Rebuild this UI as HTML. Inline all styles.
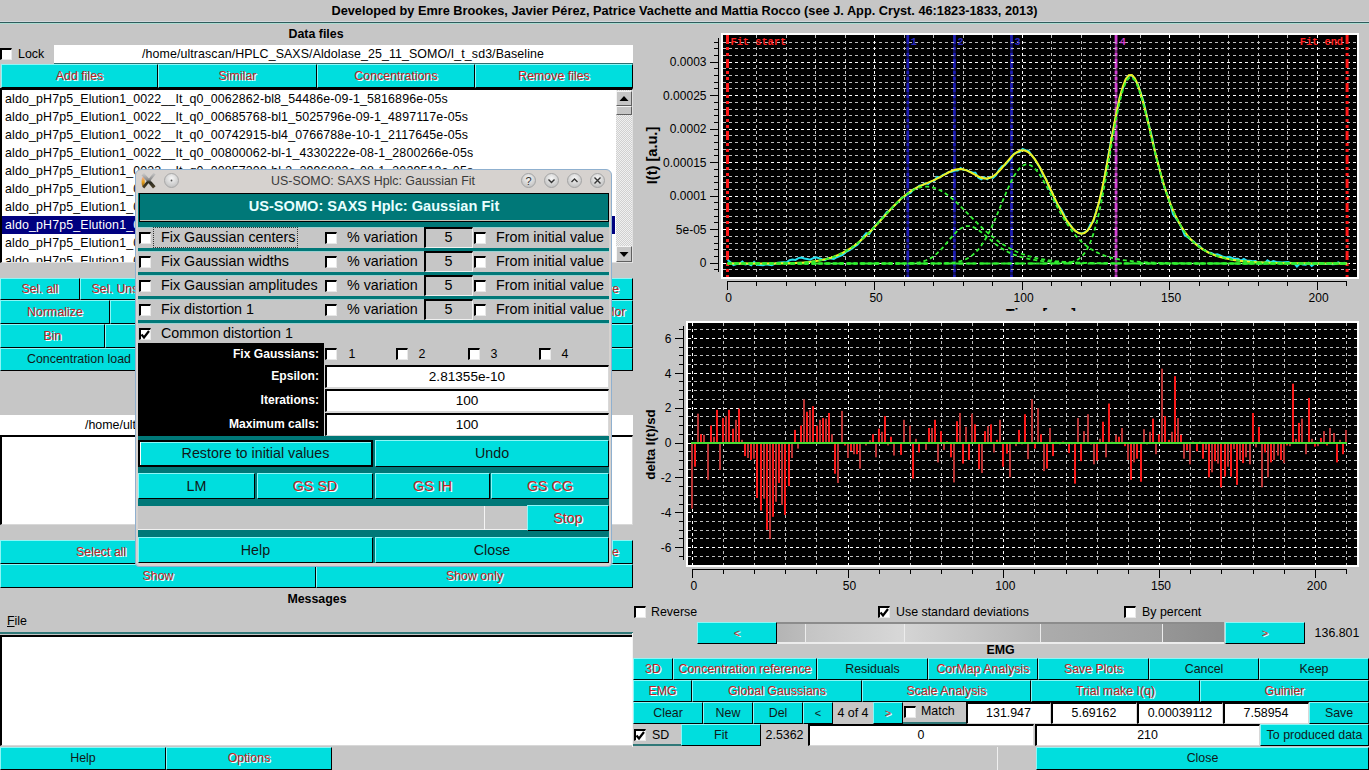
<!DOCTYPE html>
<html><head><meta charset="utf-8"><style>
html,body{margin:0;padding:0}
body{width:1369px;height:770px;position:relative;overflow:hidden;background:#c6c6c6;font-family:"Liberation Sans", sans-serif;color:#000}
body div, body svg{position:absolute}
.t{white-space:nowrap;overflow:visible}
.dis{color:#c42424;text-shadow:1px 1px 0 #fff}
.en{color:#101818}
</style></head><body>
<svg style="left:0;top:0" width="1369" height="770" viewBox="0 0 1369 770">
<rect x="721" y="33" width="638" height="246" fill="#fff"/>
<rect x="723" y="35" width="634" height="242" fill="#000"/>
<line x1="907.82" y1="35" x2="907.82" y2="277" stroke="#101068" stroke-width="2.6"/><line x1="907.82" y1="35" x2="907.82" y2="277" stroke="#1e1eb4" stroke-width="2.6" stroke-dasharray="9 3 3 3 3 3"/>
<line x1="954.40" y1="35" x2="954.40" y2="277" stroke="#101068" stroke-width="2.6"/><line x1="954.40" y1="35" x2="954.40" y2="277" stroke="#1e1eb4" stroke-width="2.6" stroke-dasharray="9 3 3 3 3 3"/>
<line x1="1011.48" y1="35" x2="1011.48" y2="277" stroke="#101068" stroke-width="2.6"/><line x1="1011.48" y1="35" x2="1011.48" y2="277" stroke="#1e1eb4" stroke-width="2.6" stroke-dasharray="9 3 3 3 3 3"/>
<line x1="1116.04" y1="35" x2="1116.04" y2="277" stroke="#7a2a7a" stroke-width="2.6"/><line x1="1116.04" y1="35" x2="1116.04" y2="277" stroke="#d040d0" stroke-width="2.6" stroke-dasharray="9 3 3 3 3 3"/>
<g shape-rendering="crispEdges">
<line x1="723" y1="269.5" x2="1357" y2="269.5" stroke="#bdbdbd" stroke-dasharray="3 3"/>
<line x1="723" y1="256.5" x2="1357" y2="256.5" stroke="#bdbdbd" stroke-dasharray="3 3"/>
<line x1="723" y1="249.5" x2="1357" y2="249.5" stroke="#bdbdbd" stroke-dasharray="3 3"/>
<line x1="723" y1="243.5" x2="1357" y2="243.5" stroke="#bdbdbd" stroke-dasharray="3 3"/>
<line x1="723" y1="236.5" x2="1357" y2="236.5" stroke="#bdbdbd" stroke-dasharray="3 3"/>
<line x1="723" y1="222.5" x2="1357" y2="222.5" stroke="#bdbdbd" stroke-dasharray="3 3"/>
<line x1="723" y1="216.5" x2="1357" y2="216.5" stroke="#bdbdbd" stroke-dasharray="3 3"/>
<line x1="723" y1="209.5" x2="1357" y2="209.5" stroke="#bdbdbd" stroke-dasharray="3 3"/>
<line x1="723" y1="202.5" x2="1357" y2="202.5" stroke="#bdbdbd" stroke-dasharray="3 3"/>
<line x1="723" y1="189.5" x2="1357" y2="189.5" stroke="#bdbdbd" stroke-dasharray="3 3"/>
<line x1="723" y1="182.5" x2="1357" y2="182.5" stroke="#bdbdbd" stroke-dasharray="3 3"/>
<line x1="723" y1="176.5" x2="1357" y2="176.5" stroke="#bdbdbd" stroke-dasharray="3 3"/>
<line x1="723" y1="169.5" x2="1357" y2="169.5" stroke="#bdbdbd" stroke-dasharray="3 3"/>
<line x1="723" y1="155.5" x2="1357" y2="155.5" stroke="#bdbdbd" stroke-dasharray="3 3"/>
<line x1="723" y1="149.5" x2="1357" y2="149.5" stroke="#bdbdbd" stroke-dasharray="3 3"/>
<line x1="723" y1="142.5" x2="1357" y2="142.5" stroke="#bdbdbd" stroke-dasharray="3 3"/>
<line x1="723" y1="135.5" x2="1357" y2="135.5" stroke="#bdbdbd" stroke-dasharray="3 3"/>
<line x1="723" y1="122.5" x2="1357" y2="122.5" stroke="#bdbdbd" stroke-dasharray="3 3"/>
<line x1="723" y1="115.5" x2="1357" y2="115.5" stroke="#bdbdbd" stroke-dasharray="3 3"/>
<line x1="723" y1="109.5" x2="1357" y2="109.5" stroke="#bdbdbd" stroke-dasharray="3 3"/>
<line x1="723" y1="102.5" x2="1357" y2="102.5" stroke="#bdbdbd" stroke-dasharray="3 3"/>
<line x1="723" y1="88.5" x2="1357" y2="88.5" stroke="#bdbdbd" stroke-dasharray="3 3"/>
<line x1="723" y1="82.5" x2="1357" y2="82.5" stroke="#bdbdbd" stroke-dasharray="3 3"/>
<line x1="723" y1="75.5" x2="1357" y2="75.5" stroke="#bdbdbd" stroke-dasharray="3 3"/>
<line x1="723" y1="68.5" x2="1357" y2="68.5" stroke="#bdbdbd" stroke-dasharray="3 3"/>
<line x1="723" y1="55.5" x2="1357" y2="55.5" stroke="#bdbdbd" stroke-dasharray="3 3"/>
<line x1="723" y1="48.5" x2="1357" y2="48.5" stroke="#bdbdbd" stroke-dasharray="3 3"/>
<line x1="723" y1="42.5" x2="1357" y2="42.5" stroke="#bdbdbd" stroke-dasharray="3 3"/>
<line x1="723" y1="263.5" x2="1357" y2="263.5" stroke="#ffffff" stroke-dasharray="3 3"/>
<line x1="723" y1="229.5" x2="1357" y2="229.5" stroke="#ffffff" stroke-dasharray="3 3"/>
<line x1="723" y1="196.5" x2="1357" y2="196.5" stroke="#ffffff" stroke-dasharray="3 3"/>
<line x1="723" y1="162.5" x2="1357" y2="162.5" stroke="#ffffff" stroke-dasharray="3 3"/>
<line x1="723" y1="129.5" x2="1357" y2="129.5" stroke="#ffffff" stroke-dasharray="3 3"/>
<line x1="723" y1="95.5" x2="1357" y2="95.5" stroke="#ffffff" stroke-dasharray="3 3"/>
<line x1="723" y1="62.5" x2="1357" y2="62.5" stroke="#ffffff" stroke-dasharray="3 3"/>
<line x1="756.5" y1="35" x2="756.5" y2="277" stroke="#bdbdbd" stroke-dasharray="3 3"/>
<line x1="786.5" y1="35" x2="786.5" y2="277" stroke="#bdbdbd" stroke-dasharray="3 3"/>
<line x1="815.5" y1="35" x2="815.5" y2="277" stroke="#bdbdbd" stroke-dasharray="3 3"/>
<line x1="845.5" y1="35" x2="845.5" y2="277" stroke="#bdbdbd" stroke-dasharray="3 3"/>
<line x1="904.5" y1="35" x2="904.5" y2="277" stroke="#bdbdbd" stroke-dasharray="3 3"/>
<line x1="933.5" y1="35" x2="933.5" y2="277" stroke="#bdbdbd" stroke-dasharray="3 3"/>
<line x1="963.5" y1="35" x2="963.5" y2="277" stroke="#bdbdbd" stroke-dasharray="3 3"/>
<line x1="992.5" y1="35" x2="992.5" y2="277" stroke="#bdbdbd" stroke-dasharray="3 3"/>
<line x1="1051.5" y1="35" x2="1051.5" y2="277" stroke="#bdbdbd" stroke-dasharray="3 3"/>
<line x1="1081.5" y1="35" x2="1081.5" y2="277" stroke="#bdbdbd" stroke-dasharray="3 3"/>
<line x1="1110.5" y1="35" x2="1110.5" y2="277" stroke="#bdbdbd" stroke-dasharray="3 3"/>
<line x1="1140.5" y1="35" x2="1140.5" y2="277" stroke="#bdbdbd" stroke-dasharray="3 3"/>
<line x1="1199.5" y1="35" x2="1199.5" y2="277" stroke="#bdbdbd" stroke-dasharray="3 3"/>
<line x1="1228.5" y1="35" x2="1228.5" y2="277" stroke="#bdbdbd" stroke-dasharray="3 3"/>
<line x1="1258.5" y1="35" x2="1258.5" y2="277" stroke="#bdbdbd" stroke-dasharray="3 3"/>
<line x1="1287.5" y1="35" x2="1287.5" y2="277" stroke="#bdbdbd" stroke-dasharray="3 3"/>
<line x1="1346.5" y1="35" x2="1346.5" y2="277" stroke="#bdbdbd" stroke-dasharray="3 3"/>
<line x1="727.5" y1="35" x2="727.5" y2="277" stroke="#ffffff" stroke-dasharray="3 3"/>
<line x1="874.5" y1="35" x2="874.5" y2="277" stroke="#ffffff" stroke-dasharray="3 3"/>
<line x1="1022.5" y1="35" x2="1022.5" y2="277" stroke="#ffffff" stroke-dasharray="3 3"/>
<line x1="1169.5" y1="35" x2="1169.5" y2="277" stroke="#ffffff" stroke-dasharray="3 3"/>
<line x1="1317.5" y1="35" x2="1317.5" y2="277" stroke="#ffffff" stroke-dasharray="3 3"/>
</g>
<line x1="727.50" y1="35" x2="727.50" y2="277" stroke="#ff1a1a" stroke-width="3" stroke-dasharray="9 3 3 3 3 3"/>
<line x1="1347.10" y1="35" x2="1347.10" y2="277" stroke="#ff1a1a" stroke-width="3" stroke-dasharray="9 3 3 3 3 3"/>
<line x1="727.6" y1="263.5" x2="1347.1" y2="263.5" stroke="#30ee30" stroke-width="2" stroke-dasharray="8 4"/>
<polyline points="727.60,259.97 730.55,262.22 733.50,265.07 736.45,263.97 739.40,263.94 742.35,261.52 745.30,264.43 748.25,263.83 751.20,265.27 754.15,262.04 757.10,264.82 760.05,264.92 763.00,265.25 765.95,264.22 768.90,264.69 771.85,265.27 774.80,263.57 777.75,262.67 780.70,262.52 783.65,262.37 786.60,262.38 789.55,260.19 792.50,259.42 795.45,259.95 798.40,258.13 801.35,257.47 804.30,258.45 807.25,259.01 810.20,259.72 813.15,258.18 816.10,257.23 819.05,258.28 822.00,259.22 824.95,260.06 827.90,258.28 830.85,258.63 833.80,259.03 836.75,257.23 839.70,256.05 842.65,254.81 845.60,252.17 848.55,250.72 851.50,248.89 854.45,246.76 857.40,244.79 860.35,241.21 863.30,236.50 866.25,233.25 869.20,234.24 872.15,229.37 875.10,225.58 878.05,222.76 881.00,219.35 883.95,216.08 886.90,212.04 889.85,210.24 892.80,206.91 895.75,204.15 898.70,201.56 901.65,197.59 904.60,196.59 907.55,194.10 910.50,192.84 913.45,189.40 916.40,188.21 919.35,185.72 922.30,185.12 925.25,183.20 928.20,183.88 931.15,181.36 934.10,181.04 937.05,176.76 940.00,177.36 942.95,175.00 945.90,173.89 948.85,171.90 951.80,171.68 954.75,170.61 957.70,170.41 960.65,167.99 963.60,170.07 966.55,169.98 969.50,171.76 972.45,172.49 975.40,172.81 978.35,177.65 981.30,179.31 984.25,177.29 987.20,179.32 990.15,176.84 993.10,177.86 996.05,175.10 999.00,169.88 1001.95,166.40 1004.90,165.10 1007.85,161.80 1010.80,158.51 1013.75,154.06 1016.70,152.44 1019.65,152.05 1022.60,149.02 1025.55,150.25 1028.50,150.57 1031.45,155.10 1034.40,158.48 1037.35,163.79 1040.30,168.16 1043.25,175.47 1046.20,179.11 1049.15,188.61 1052.10,192.28 1055.05,200.69 1058.00,205.30 1060.95,209.04 1063.90,214.47 1066.85,221.47 1069.80,224.20 1072.75,228.54 1075.70,231.14 1078.65,233.09 1081.60,233.60 1084.55,232.43 1087.50,230.57 1090.45,224.28 1093.40,221.56 1096.35,210.78 1099.30,201.70 1102.25,189.82 1105.20,173.61 1108.15,156.69 1111.10,140.45 1114.05,125.39 1117.00,111.17 1119.95,96.06 1122.90,88.41 1125.85,79.04 1128.80,75.62 1131.75,75.32 1134.70,79.00 1137.65,84.26 1140.60,92.23 1143.55,101.75 1146.50,114.51 1149.45,127.17 1152.40,138.54 1155.35,153.68 1158.30,164.61 1161.25,176.25 1164.20,187.04 1167.15,194.25 1170.10,203.52 1173.05,214.34 1176.00,218.27 1178.95,222.70 1181.90,228.17 1184.85,235.58 1187.80,237.22 1190.75,239.72 1193.70,241.43 1196.65,244.49 1199.60,246.04 1202.55,249.28 1205.50,250.53 1208.45,252.59 1211.40,253.03 1214.35,254.69 1217.30,254.25 1220.25,255.44 1223.20,256.84 1226.15,257.41 1229.10,256.75 1232.05,257.86 1235.00,258.87 1237.95,258.75 1240.90,260.58 1243.85,258.99 1246.80,260.61 1249.75,260.68 1252.70,261.21 1255.65,261.02 1258.60,263.94 1261.55,262.24 1264.50,263.47 1267.45,260.33 1270.40,262.30 1273.35,261.05 1276.30,261.93 1279.25,262.13 1282.20,262.42 1285.15,262.23 1288.10,262.11 1291.05,263.09 1294.00,263.09 1296.95,266.48 1299.90,263.54 1302.85,264.42 1305.80,264.67 1308.75,262.78 1311.70,265.81 1314.65,263.63 1317.60,263.22 1320.55,263.26 1323.50,263.71 1326.45,264.08 1329.40,263.32 1332.35,264.26 1335.30,264.00 1338.25,262.43 1341.20,263.64 1344.15,262.87 1347.10,264.18" fill="none" stroke="#22e0f0" stroke-width="2"/>
<polyline points="727.60,263.50 730.55,263.50 733.50,263.50 736.45,263.50 739.40,263.50 742.35,263.50 745.30,263.49 748.25,263.49 751.20,263.49 754.15,263.49 757.10,263.48 760.05,263.47 763.00,263.47 765.95,263.46 768.90,263.44 771.85,263.42 774.80,263.40 777.75,263.37 780.70,263.33 783.65,263.28 786.60,263.22 789.55,263.15 792.50,263.05 795.45,262.94 798.40,262.80 801.35,262.63 804.30,262.42 807.25,262.17 810.20,261.87 813.15,261.51 816.10,261.09 819.05,260.60 822.00,260.02 824.95,259.35 827.90,258.58 830.85,257.70 833.80,256.69 836.75,255.55 839.70,254.26 842.65,252.83 845.60,251.23 848.55,249.48 851.50,247.55 854.45,245.45 857.40,243.18 860.35,240.74 863.30,238.15 866.25,235.40 869.20,232.51 872.15,229.50 875.10,226.39 878.05,223.20 881.00,219.95 883.95,216.68 886.90,213.42 889.85,210.19 892.80,207.04 895.75,204.00 898.70,201.09 901.65,198.36 904.60,195.82 907.55,193.50 910.50,191.40 913.45,189.53 916.40,187.87 919.35,186.40 922.30,185.07 925.25,183.84 928.20,182.64 931.15,181.41 934.10,180.10 937.05,178.68 940.00,177.14 942.95,175.50 945.90,173.85 948.85,172.26 951.80,170.88 954.75,169.80 957.70,169.16 960.65,169.03 963.60,169.43 966.55,170.35 969.50,171.67 972.45,173.26 975.40,174.93 978.35,176.48 981.30,177.70 984.25,178.40 987.20,178.45 990.15,177.75 993.10,176.29 996.05,174.10 999.00,171.29 1001.95,168.01 1004.90,164.47 1007.85,160.89 1010.80,157.51 1013.75,154.56 1016.70,152.27 1019.65,150.80 1022.60,150.29 1025.55,150.82 1028.50,152.42 1031.45,155.05 1034.40,158.65 1037.35,163.09 1040.30,168.24 1043.25,173.92 1046.20,179.99 1049.15,186.25 1052.10,192.58 1055.05,198.81 1058.00,204.84 1060.95,210.55 1063.90,215.85 1066.85,220.67 1069.80,224.90 1072.75,228.46 1075.70,231.22 1078.65,233.02 1081.60,233.68 1084.55,232.97 1087.50,230.65 1090.45,226.47 1093.40,220.22 1096.35,211.76 1099.30,201.06 1102.25,188.27 1105.20,173.69 1108.15,157.84 1111.10,141.39 1114.05,125.17 1117.00,110.03 1119.95,96.83 1122.90,86.29 1125.85,78.96 1128.80,75.18 1131.75,74.98 1134.70,78.19 1137.65,84.42 1140.60,93.14 1143.55,103.73 1146.50,115.55 1149.45,128.02 1152.40,140.62 1155.35,152.94 1158.30,164.69 1161.25,175.65 1164.20,185.72 1167.15,194.85 1170.10,203.05 1173.05,210.35 1176.00,216.82 1178.95,222.54 1181.90,227.57 1184.85,231.99 1187.80,235.87 1190.75,239.28 1193.70,242.27 1196.65,244.89 1199.60,247.19 1202.55,249.20 1205.50,250.97 1208.45,252.51 1211.40,253.87 1214.35,255.06 1217.30,256.10 1220.25,257.01 1223.20,257.81 1226.15,258.52 1229.10,259.13 1232.05,259.67 1235.00,260.14 1237.95,260.56 1240.90,260.92 1243.85,261.24 1246.80,261.52 1249.75,261.76 1252.70,261.98 1255.65,262.17 1258.60,262.33 1261.55,262.47 1264.50,262.60 1267.45,262.71 1270.40,262.81 1273.35,262.89 1276.30,262.97 1279.25,263.03 1282.20,263.09 1285.15,263.14 1288.10,263.19 1291.05,263.23 1294.00,263.26 1296.95,263.29 1299.90,263.32 1302.85,263.34 1305.80,263.36 1308.75,263.38 1311.70,263.39 1314.65,263.40 1317.60,263.42 1320.55,263.43 1323.50,263.44 1326.45,263.44 1329.40,263.45 1332.35,263.46 1335.30,263.46 1338.25,263.47 1341.20,263.47 1344.15,263.47 1347.10,263.48" fill="none" stroke="#f0f020" stroke-width="2"/>
<polyline points="727.60,263.50 730.55,263.50 733.50,263.50 736.45,263.50 739.40,263.50 742.35,263.50 745.30,263.49 748.25,263.49 751.20,263.49 754.15,263.49 757.10,263.48 760.05,263.47 763.00,263.47 765.95,263.46 768.90,263.44 771.85,263.42 774.80,263.40 777.75,263.37 780.70,263.33 783.65,263.28 786.60,263.22 789.55,263.15 792.50,263.05 795.45,262.94 798.40,262.80 801.35,262.63 804.30,262.42 807.25,262.17 810.20,261.87 813.15,261.51 816.10,261.09 819.05,260.60 822.00,260.02 824.95,259.35 827.90,258.58 830.85,257.70 833.80,256.69 836.75,255.55 839.70,254.26 842.65,252.83 845.60,251.23 848.55,249.48 851.50,247.55 854.45,245.45 857.40,243.18 860.35,240.74 863.30,238.15 866.25,235.40 869.20,232.51 872.15,229.50 875.10,226.39 878.05,223.20 881.00,219.95 883.95,216.68 886.90,213.42 889.85,210.20 892.80,207.05 895.75,204.01 898.70,201.12 901.65,198.41 904.60,195.91 907.55,193.66 910.50,191.68 913.45,190.00 916.40,188.64 919.35,187.61 922.30,186.94 925.25,186.61 928.20,186.65 931.15,187.03 934.10,187.76 937.05,188.82 940.00,190.20 942.95,191.86 945.90,193.79 948.85,195.97 951.80,198.35 954.75,200.91 957.70,203.62 960.65,206.45 963.60,209.36 966.55,212.32 969.50,215.30 972.45,218.29 975.40,221.24 978.35,224.15 981.30,226.98 984.25,229.72 987.20,232.37 990.15,234.89 993.10,237.30 996.05,239.57 999.00,241.72 1001.95,243.72 1004.90,245.59 1007.85,247.32 1010.80,248.92 1013.75,250.40 1016.70,251.75 1019.65,252.98 1022.60,254.10 1025.55,255.12 1028.50,256.04 1031.45,256.87 1034.40,257.62 1037.35,258.29 1040.30,258.89 1043.25,259.42 1046.20,259.90 1049.15,260.32 1052.10,260.70 1055.05,261.03 1058.00,261.33 1060.95,261.59 1063.90,261.82 1066.85,262.02 1069.80,262.20 1072.75,262.36 1075.70,262.50 1078.65,262.62 1081.60,262.73 1084.55,262.82 1087.50,262.91 1090.45,262.98 1093.40,263.04 1096.35,263.10 1099.30,263.15 1102.25,263.19 1105.20,263.23 1108.15,263.26 1111.10,263.29 1114.05,263.32 1117.00,263.34 1119.95,263.36 1122.90,263.38 1125.85,263.39 1128.80,263.41 1131.75,263.42 1134.70,263.43 1137.65,263.44 1140.60,263.44 1143.55,263.45 1146.50,263.46 1149.45,263.46 1152.40,263.47 1155.35,263.47 1158.30,263.47 1161.25,263.48 1164.20,263.48 1167.15,263.48 1170.10,263.49 1173.05,263.49 1176.00,263.49 1178.95,263.49 1181.90,263.49 1184.85,263.49 1187.80,263.49 1190.75,263.49 1193.70,263.49 1196.65,263.50 1199.60,263.50 1202.55,263.50 1205.50,263.50 1208.45,263.50 1211.40,263.50 1214.35,263.50 1217.30,263.50 1220.25,263.50 1223.20,263.50 1226.15,263.50 1229.10,263.50 1232.05,263.50 1235.00,263.50 1237.95,263.50 1240.90,263.50 1243.85,263.50 1246.80,263.50 1249.75,263.50 1252.70,263.50 1255.65,263.50 1258.60,263.50 1261.55,263.50 1264.50,263.50 1267.45,263.50 1270.40,263.50 1273.35,263.50 1276.30,263.50 1279.25,263.50 1282.20,263.50 1285.15,263.50 1288.10,263.50 1291.05,263.50 1294.00,263.50 1296.95,263.50 1299.90,263.50 1302.85,263.50 1305.80,263.50 1308.75,263.50 1311.70,263.50 1314.65,263.50 1317.60,263.50 1320.55,263.50 1323.50,263.50 1326.45,263.50 1329.40,263.50 1332.35,263.50 1335.30,263.50 1338.25,263.50 1341.20,263.50 1344.15,263.50 1347.10,263.50" fill="none" stroke="#30ee30" stroke-width="1.8" stroke-dasharray="4 3"/>
<polyline points="727.60,263.50 730.55,263.50 733.50,263.50 736.45,263.50 739.40,263.50 742.35,263.50 745.30,263.50 748.25,263.50 751.20,263.50 754.15,263.50 757.10,263.50 760.05,263.50 763.00,263.50 765.95,263.50 768.90,263.50 771.85,263.50 774.80,263.50 777.75,263.50 780.70,263.50 783.65,263.50 786.60,263.50 789.55,263.50 792.50,263.50 795.45,263.50 798.40,263.50 801.35,263.50 804.30,263.50 807.25,263.50 810.20,263.50 813.15,263.50 816.10,263.50 819.05,263.50 822.00,263.50 824.95,263.50 827.90,263.50 830.85,263.50 833.80,263.50 836.75,263.50 839.70,263.50 842.65,263.50 845.60,263.50 848.55,263.50 851.50,263.50 854.45,263.50 857.40,263.50 860.35,263.50 863.30,263.50 866.25,263.50 869.20,263.50 872.15,263.50 875.10,263.50 878.05,263.50 881.00,263.50 883.95,263.50 886.90,263.50 889.85,263.50 892.80,263.49 895.75,263.49 898.70,263.47 901.65,263.45 904.60,263.41 907.55,263.34 910.50,263.22 913.45,263.03 916.40,262.73 919.35,262.29 922.30,261.64 925.25,260.73 928.20,259.51 931.15,257.91 934.10,255.89 937.05,253.44 940.00,250.58 942.95,247.36 945.90,243.89 948.85,240.31 951.80,236.80 954.75,233.54 957.70,230.71 960.65,228.46 963.60,226.92 966.55,226.13 969.50,226.11 972.45,226.81 975.40,228.14 978.35,229.96 981.30,232.16 984.25,234.58 987.20,237.11 990.15,239.65 993.10,242.11 996.05,244.43 999.00,246.59 1001.95,248.55 1004.90,250.33 1007.85,251.91 1010.80,253.32 1013.75,254.56 1016.70,255.66 1019.65,256.63 1022.60,257.47 1025.55,258.22 1028.50,258.87 1031.45,259.44 1034.40,259.94 1037.35,260.38 1040.30,260.77 1043.25,261.10 1046.20,261.40 1049.15,261.66 1052.10,261.89 1055.05,262.08 1058.00,262.26 1060.95,262.41 1063.90,262.55 1066.85,262.66 1069.80,262.77 1072.75,262.86 1075.70,262.94 1078.65,263.01 1081.60,263.07 1084.55,263.12 1087.50,263.17 1090.45,263.21 1093.40,263.24 1096.35,263.28 1099.30,263.30 1102.25,263.33 1105.20,263.35 1108.15,263.37 1111.10,263.38 1114.05,263.40 1117.00,263.41 1119.95,263.42 1122.90,263.43 1125.85,263.44 1128.80,263.45 1131.75,263.45 1134.70,263.46 1137.65,263.46 1140.60,263.47 1143.55,263.47 1146.50,263.48 1149.45,263.48 1152.40,263.48 1155.35,263.48 1158.30,263.49 1161.25,263.49 1164.20,263.49 1167.15,263.49 1170.10,263.49 1173.05,263.49 1176.00,263.49 1178.95,263.49 1181.90,263.50 1184.85,263.50 1187.80,263.50 1190.75,263.50 1193.70,263.50 1196.65,263.50 1199.60,263.50 1202.55,263.50 1205.50,263.50 1208.45,263.50 1211.40,263.50 1214.35,263.50 1217.30,263.50 1220.25,263.50 1223.20,263.50 1226.15,263.50 1229.10,263.50 1232.05,263.50 1235.00,263.50 1237.95,263.50 1240.90,263.50 1243.85,263.50 1246.80,263.50 1249.75,263.50 1252.70,263.50 1255.65,263.50 1258.60,263.50 1261.55,263.50 1264.50,263.50 1267.45,263.50 1270.40,263.50 1273.35,263.50 1276.30,263.50 1279.25,263.50 1282.20,263.50 1285.15,263.50 1288.10,263.50 1291.05,263.50 1294.00,263.50 1296.95,263.50 1299.90,263.50 1302.85,263.50 1305.80,263.50 1308.75,263.50 1311.70,263.50 1314.65,263.50 1317.60,263.50 1320.55,263.50 1323.50,263.50 1326.45,263.50 1329.40,263.50 1332.35,263.50 1335.30,263.50 1338.25,263.50 1341.20,263.50 1344.15,263.50 1347.10,263.50" fill="none" stroke="#30ee30" stroke-width="1.8" stroke-dasharray="4 3"/>
<polyline points="727.60,263.50 730.55,263.50 733.50,263.50 736.45,263.50 739.40,263.50 742.35,263.50 745.30,263.50 748.25,263.50 751.20,263.50 754.15,263.50 757.10,263.50 760.05,263.50 763.00,263.50 765.95,263.50 768.90,263.50 771.85,263.50 774.80,263.50 777.75,263.50 780.70,263.50 783.65,263.50 786.60,263.50 789.55,263.50 792.50,263.50 795.45,263.50 798.40,263.50 801.35,263.50 804.30,263.50 807.25,263.50 810.20,263.50 813.15,263.50 816.10,263.50 819.05,263.50 822.00,263.50 824.95,263.50 827.90,263.50 830.85,263.50 833.80,263.50 836.75,263.50 839.70,263.50 842.65,263.50 845.60,263.50 848.55,263.50 851.50,263.50 854.45,263.50 857.40,263.50 860.35,263.50 863.30,263.50 866.25,263.50 869.20,263.50 872.15,263.50 875.10,263.50 878.05,263.50 881.00,263.50 883.95,263.50 886.90,263.50 889.85,263.50 892.80,263.50 895.75,263.50 898.70,263.50 901.65,263.50 904.60,263.50 907.55,263.50 910.50,263.50 913.45,263.50 916.40,263.50 919.35,263.50 922.30,263.49 925.25,263.49 928.20,263.48 931.15,263.47 934.10,263.45 937.05,263.41 940.00,263.36 942.95,263.28 945.90,263.16 948.85,262.98 951.80,262.72 954.75,262.35 957.70,261.84 960.65,261.12 963.60,260.16 966.55,258.90 969.50,257.25 972.45,255.16 975.40,252.56 978.35,249.37 981.30,245.56 984.25,241.10 987.20,235.97 990.15,230.21 993.10,223.88 996.05,217.09 999.00,209.98 1001.95,202.73 1004.90,195.55 1007.85,188.65 1010.80,182.26 1013.75,176.60 1016.70,171.86 1019.65,168.19 1022.60,165.71 1025.55,164.48 1028.50,164.51 1031.45,165.74 1034.40,168.09 1037.35,171.42 1040.30,175.58 1043.25,180.40 1046.20,185.69 1049.15,191.29 1052.10,197.02 1055.05,202.74 1058.00,208.34 1060.95,213.72 1063.90,218.81 1066.85,223.57 1069.80,227.95 1072.75,231.96 1075.70,235.59 1078.65,238.86 1081.60,241.79 1084.55,244.39 1087.50,246.70 1090.45,248.74 1093.40,250.55 1096.35,252.14 1099.30,253.53 1102.25,254.76 1105.20,255.84 1108.15,256.78 1111.10,257.61 1114.05,258.34 1117.00,258.97 1119.95,259.53 1122.90,260.02 1125.85,260.45 1128.80,260.83 1131.75,261.16 1134.70,261.45 1137.65,261.70 1140.60,261.92 1143.55,262.12 1146.50,262.29 1149.45,262.44 1152.40,262.57 1155.35,262.68 1158.30,262.78 1161.25,262.87 1164.20,262.95 1167.15,263.02 1170.10,263.08 1173.05,263.13 1176.00,263.18 1178.95,263.22 1181.90,263.25 1184.85,263.28 1187.80,263.31 1190.75,263.33 1193.70,263.35 1196.65,263.37 1199.60,263.39 1202.55,263.40 1205.50,263.41 1208.45,263.42 1211.40,263.43 1214.35,263.44 1217.30,263.45 1220.25,263.46 1223.20,263.46 1226.15,263.47 1229.10,263.47 1232.05,263.47 1235.00,263.48 1237.95,263.48 1240.90,263.48 1243.85,263.48 1246.80,263.49 1249.75,263.49 1252.70,263.49 1255.65,263.49 1258.60,263.49 1261.55,263.49 1264.50,263.49 1267.45,263.49 1270.40,263.50 1273.35,263.50 1276.30,263.50 1279.25,263.50 1282.20,263.50 1285.15,263.50 1288.10,263.50 1291.05,263.50 1294.00,263.50 1296.95,263.50 1299.90,263.50 1302.85,263.50 1305.80,263.50 1308.75,263.50 1311.70,263.50 1314.65,263.50 1317.60,263.50 1320.55,263.50 1323.50,263.50 1326.45,263.50 1329.40,263.50 1332.35,263.50 1335.30,263.50 1338.25,263.50 1341.20,263.50 1344.15,263.50 1347.10,263.50" fill="none" stroke="#30ee30" stroke-width="1.8" stroke-dasharray="4 3"/>
<polyline points="727.60,263.50 730.55,263.50 733.50,263.50 736.45,263.50 739.40,263.50 742.35,263.50 745.30,263.50 748.25,263.50 751.20,263.50 754.15,263.50 757.10,263.50 760.05,263.50 763.00,263.50 765.95,263.50 768.90,263.50 771.85,263.50 774.80,263.50 777.75,263.50 780.70,263.50 783.65,263.50 786.60,263.50 789.55,263.50 792.50,263.50 795.45,263.50 798.40,263.50 801.35,263.50 804.30,263.50 807.25,263.50 810.20,263.50 813.15,263.50 816.10,263.50 819.05,263.50 822.00,263.50 824.95,263.50 827.90,263.50 830.85,263.50 833.80,263.50 836.75,263.50 839.70,263.50 842.65,263.50 845.60,263.50 848.55,263.50 851.50,263.50 854.45,263.50 857.40,263.50 860.35,263.50 863.30,263.50 866.25,263.50 869.20,263.50 872.15,263.50 875.10,263.50 878.05,263.50 881.00,263.50 883.95,263.50 886.90,263.50 889.85,263.50 892.80,263.50 895.75,263.50 898.70,263.50 901.65,263.50 904.60,263.50 907.55,263.50 910.50,263.50 913.45,263.50 916.40,263.50 919.35,263.50 922.30,263.50 925.25,263.50 928.20,263.50 931.15,263.50 934.10,263.50 937.05,263.50 940.00,263.50 942.95,263.50 945.90,263.50 948.85,263.50 951.80,263.50 954.75,263.50 957.70,263.50 960.65,263.50 963.60,263.50 966.55,263.50 969.50,263.50 972.45,263.50 975.40,263.50 978.35,263.50 981.30,263.50 984.25,263.50 987.20,263.50 990.15,263.50 993.10,263.50 996.05,263.50 999.00,263.50 1001.95,263.50 1004.90,263.50 1007.85,263.50 1010.80,263.50 1013.75,263.50 1016.70,263.50 1019.65,263.50 1022.60,263.50 1025.55,263.50 1028.50,263.50 1031.45,263.50 1034.40,263.50 1037.35,263.50 1040.30,263.50 1043.25,263.50 1046.20,263.49 1049.15,263.49 1052.10,263.48 1055.05,263.45 1058.00,263.41 1060.95,263.32 1063.90,263.17 1066.85,262.91 1069.80,262.48 1072.75,261.78 1075.70,260.69 1078.65,259.03 1081.60,256.59 1084.55,253.13 1087.50,248.37 1090.45,242.03 1093.40,233.88 1096.35,223.75 1099.30,211.58 1102.25,197.49 1105.20,181.77 1108.15,164.92 1111.10,147.61 1114.05,130.61 1117.00,114.80 1119.95,101.01 1122.90,89.96 1125.85,82.18 1128.80,77.99 1131.75,77.45 1134.70,80.36 1137.65,86.32 1140.60,94.81 1143.55,105.18 1146.50,116.83 1149.45,129.14 1152.40,141.60 1155.35,153.80 1158.30,165.44 1161.25,176.32 1164.20,186.30 1167.15,195.36 1170.10,203.49 1173.05,210.74 1176.00,217.16 1178.95,222.84 1181.90,227.83 1184.85,232.22 1187.80,236.08 1190.75,239.46 1193.70,242.43 1196.65,245.03 1199.60,247.31 1202.55,249.31 1205.50,251.06 1208.45,252.59 1211.40,253.94 1214.35,255.12 1217.30,256.15 1220.25,257.06 1223.20,257.86 1226.15,258.55 1229.10,259.16 1232.05,259.70 1235.00,260.17 1237.95,260.58 1240.90,260.94 1243.85,261.26 1246.80,261.53 1249.75,261.78 1252.70,261.99 1255.65,262.18 1258.60,262.34 1261.55,262.48 1264.50,262.61 1267.45,262.72 1270.40,262.81 1273.35,262.90 1276.30,262.97 1279.25,263.04 1282.20,263.10 1285.15,263.15 1288.10,263.19 1291.05,263.23 1294.00,263.26 1296.95,263.29 1299.90,263.32 1302.85,263.34 1305.80,263.36 1308.75,263.38 1311.70,263.39 1314.65,263.41 1317.60,263.42 1320.55,263.43 1323.50,263.44 1326.45,263.44 1329.40,263.45 1332.35,263.46 1335.30,263.46 1338.25,263.47 1341.20,263.47 1344.15,263.47 1347.10,263.48" fill="none" stroke="#30ee30" stroke-width="1.8" stroke-dasharray="4 3"/>
<text x="730.5" y="45" font-family="Liberation Mono" font-weight="bold" font-size="10.3" fill="#ff2020">Fit start</text>
<text x="1343" y="45" font-family="Liberation Mono" font-weight="bold" font-size="10.3" fill="#ff2020" text-anchor="end">Fit end</text>
<text x="910.8" y="45" font-family="Liberation Mono" font-weight="bold" font-size="10.3" fill="#2828c0">1</text>
<text x="957.4" y="45" font-family="Liberation Mono" font-weight="bold" font-size="10.3" fill="#2828c0">2</text>
<text x="1014.5" y="45" font-family="Liberation Mono" font-weight="bold" font-size="10.3" fill="#2828c0">3</text>
<text x="1119.8" y="45" font-family="Liberation Mono" font-weight="bold" font-size="10.3" fill="#d040d0">4</text>
<g shape-rendering="crispEdges" stroke="#000">
<line x1="718.5" y1="38" x2="718.5" y2="272"/>
<line x1="714" y1="269.5" x2="719" y2="269.5"/>
<line x1="710" y1="263.5" x2="719" y2="263.5"/>
<line x1="714" y1="256.5" x2="719" y2="256.5"/>
<line x1="714" y1="249.5" x2="719" y2="249.5"/>
<line x1="714" y1="243.5" x2="719" y2="243.5"/>
<line x1="714" y1="236.5" x2="719" y2="236.5"/>
<line x1="710" y1="229.5" x2="719" y2="229.5"/>
<line x1="714" y1="222.5" x2="719" y2="222.5"/>
<line x1="714" y1="216.5" x2="719" y2="216.5"/>
<line x1="714" y1="209.5" x2="719" y2="209.5"/>
<line x1="714" y1="202.5" x2="719" y2="202.5"/>
<line x1="710" y1="196.5" x2="719" y2="196.5"/>
<line x1="714" y1="189.5" x2="719" y2="189.5"/>
<line x1="714" y1="182.5" x2="719" y2="182.5"/>
<line x1="714" y1="176.5" x2="719" y2="176.5"/>
<line x1="714" y1="169.5" x2="719" y2="169.5"/>
<line x1="710" y1="162.5" x2="719" y2="162.5"/>
<line x1="714" y1="155.5" x2="719" y2="155.5"/>
<line x1="714" y1="149.5" x2="719" y2="149.5"/>
<line x1="714" y1="142.5" x2="719" y2="142.5"/>
<line x1="714" y1="135.5" x2="719" y2="135.5"/>
<line x1="710" y1="129.5" x2="719" y2="129.5"/>
<line x1="714" y1="122.5" x2="719" y2="122.5"/>
<line x1="714" y1="115.5" x2="719" y2="115.5"/>
<line x1="714" y1="109.5" x2="719" y2="109.5"/>
<line x1="714" y1="102.5" x2="719" y2="102.5"/>
<line x1="710" y1="95.5" x2="719" y2="95.5"/>
<line x1="714" y1="88.5" x2="719" y2="88.5"/>
<line x1="714" y1="82.5" x2="719" y2="82.5"/>
<line x1="714" y1="75.5" x2="719" y2="75.5"/>
<line x1="714" y1="68.5" x2="719" y2="68.5"/>
<line x1="710" y1="62.5" x2="719" y2="62.5"/>
<line x1="714" y1="55.5" x2="719" y2="55.5"/>
<line x1="714" y1="48.5" x2="719" y2="48.5"/>
<line x1="714" y1="42.5" x2="719" y2="42.5"/>
<line x1="727" y1="281.5" x2="1347" y2="281.5"/>
<line x1="727.5" y1="281" x2="727.5" y2="290"/>
<line x1="756.5" y1="281" x2="756.5" y2="286"/>
<line x1="786.5" y1="281" x2="786.5" y2="286"/>
<line x1="815.5" y1="281" x2="815.5" y2="286"/>
<line x1="845.5" y1="281" x2="845.5" y2="286"/>
<line x1="874.5" y1="281" x2="874.5" y2="290"/>
<line x1="904.5" y1="281" x2="904.5" y2="286"/>
<line x1="933.5" y1="281" x2="933.5" y2="286"/>
<line x1="963.5" y1="281" x2="963.5" y2="286"/>
<line x1="992.5" y1="281" x2="992.5" y2="286"/>
<line x1="1022.5" y1="281" x2="1022.5" y2="290"/>
<line x1="1051.5" y1="281" x2="1051.5" y2="286"/>
<line x1="1081.5" y1="281" x2="1081.5" y2="286"/>
<line x1="1110.5" y1="281" x2="1110.5" y2="286"/>
<line x1="1140.5" y1="281" x2="1140.5" y2="286"/>
<line x1="1169.5" y1="281" x2="1169.5" y2="290"/>
<line x1="1199.5" y1="281" x2="1199.5" y2="286"/>
<line x1="1228.5" y1="281" x2="1228.5" y2="286"/>
<line x1="1258.5" y1="281" x2="1258.5" y2="286"/>
<line x1="1287.5" y1="281" x2="1287.5" y2="286"/>
<line x1="1317.5" y1="281" x2="1317.5" y2="290"/>
<line x1="1346.5" y1="281" x2="1346.5" y2="286"/>
</g>
<text x="706.5" y="267.4" font-family="Liberation Sans" font-size="12" text-anchor="end">0</text>
<text x="706.5" y="233.9" font-family="Liberation Sans" font-size="12" text-anchor="end">5e-05</text>
<text x="706.5" y="200.4" font-family="Liberation Sans" font-size="12" text-anchor="end">0.0001</text>
<text x="706.5" y="166.9" font-family="Liberation Sans" font-size="12" text-anchor="end">0.00015</text>
<text x="706.5" y="133.4" font-family="Liberation Sans" font-size="12" text-anchor="end">0.0002</text>
<text x="706.5" y="99.9" font-family="Liberation Sans" font-size="12" text-anchor="end">0.00025</text>
<text x="706.5" y="66.4" font-family="Liberation Sans" font-size="12" text-anchor="end">0.0003</text>
<text x="728.6" y="302" font-family="Liberation Sans" font-size="12" text-anchor="middle">0</text>
<text x="876.1" y="302" font-family="Liberation Sans" font-size="12" text-anchor="middle">50</text>
<text x="1023.6" y="302" font-family="Liberation Sans" font-size="12" text-anchor="middle">100</text>
<text x="1171.1" y="302" font-family="Liberation Sans" font-size="12" text-anchor="middle">150</text>
<text x="1318.6" y="302" font-family="Liberation Sans" font-size="12" text-anchor="middle">200</text>
<text transform="translate(656.5,155.5) rotate(-90)" font-family="Liberation Sans" font-weight="bold" font-size="14.6" text-anchor="middle">I(t) [a.u.]</text>
<clipPath id="cx"><rect x="633" y="300" width="736" height="11"/></clipPath>
<text x="1041" y="319" clip-path="url(#cx)" font-family="Liberation Sans" font-weight="bold" font-size="14" text-anchor="middle">Time [a.u.]</text>
<rect x="686" y="321" width="673" height="246" fill="#fff"/>
<rect x="688" y="323" width="669" height="242" fill="#000"/>
<g shape-rendering="crispEdges">
<line x1="688" y1="556.5" x2="1357" y2="556.5" stroke="#bdbdbd" stroke-dasharray="3 3"/>
<line x1="688" y1="538.5" x2="1357" y2="538.5" stroke="#bdbdbd" stroke-dasharray="3 3"/>
<line x1="688" y1="530.5" x2="1357" y2="530.5" stroke="#bdbdbd" stroke-dasharray="3 3"/>
<line x1="688" y1="521.5" x2="1357" y2="521.5" stroke="#bdbdbd" stroke-dasharray="3 3"/>
<line x1="688" y1="504.5" x2="1357" y2="504.5" stroke="#bdbdbd" stroke-dasharray="3 3"/>
<line x1="688" y1="495.5" x2="1357" y2="495.5" stroke="#bdbdbd" stroke-dasharray="3 3"/>
<line x1="688" y1="486.5" x2="1357" y2="486.5" stroke="#bdbdbd" stroke-dasharray="3 3"/>
<line x1="688" y1="469.5" x2="1357" y2="469.5" stroke="#bdbdbd" stroke-dasharray="3 3"/>
<line x1="688" y1="460.5" x2="1357" y2="460.5" stroke="#bdbdbd" stroke-dasharray="3 3"/>
<line x1="688" y1="451.5" x2="1357" y2="451.5" stroke="#bdbdbd" stroke-dasharray="3 3"/>
<line x1="688" y1="434.5" x2="1357" y2="434.5" stroke="#bdbdbd" stroke-dasharray="3 3"/>
<line x1="688" y1="425.5" x2="1357" y2="425.5" stroke="#bdbdbd" stroke-dasharray="3 3"/>
<line x1="688" y1="416.5" x2="1357" y2="416.5" stroke="#bdbdbd" stroke-dasharray="3 3"/>
<line x1="688" y1="399.5" x2="1357" y2="399.5" stroke="#bdbdbd" stroke-dasharray="3 3"/>
<line x1="688" y1="390.5" x2="1357" y2="390.5" stroke="#bdbdbd" stroke-dasharray="3 3"/>
<line x1="688" y1="381.5" x2="1357" y2="381.5" stroke="#bdbdbd" stroke-dasharray="3 3"/>
<line x1="688" y1="364.5" x2="1357" y2="364.5" stroke="#bdbdbd" stroke-dasharray="3 3"/>
<line x1="688" y1="355.5" x2="1357" y2="355.5" stroke="#bdbdbd" stroke-dasharray="3 3"/>
<line x1="688" y1="347.5" x2="1357" y2="347.5" stroke="#bdbdbd" stroke-dasharray="3 3"/>
<line x1="688" y1="329.5" x2="1357" y2="329.5" stroke="#bdbdbd" stroke-dasharray="3 3"/>
<line x1="688" y1="547.5" x2="1357" y2="547.5" stroke="#ffffff" stroke-dasharray="3 3"/>
<line x1="688" y1="512.5" x2="1357" y2="512.5" stroke="#ffffff" stroke-dasharray="3 3"/>
<line x1="688" y1="477.5" x2="1357" y2="477.5" stroke="#ffffff" stroke-dasharray="3 3"/>
<line x1="688" y1="443.5" x2="1357" y2="443.5" stroke="#ffffff" stroke-dasharray="3 3"/>
<line x1="688" y1="408.5" x2="1357" y2="408.5" stroke="#ffffff" stroke-dasharray="3 3"/>
<line x1="688" y1="373.5" x2="1357" y2="373.5" stroke="#ffffff" stroke-dasharray="3 3"/>
<line x1="688" y1="338.5" x2="1357" y2="338.5" stroke="#ffffff" stroke-dasharray="3 3"/>
<line x1="723.5" y1="323" x2="723.5" y2="565" stroke="#bdbdbd" stroke-dasharray="3 3"/>
<line x1="754.5" y1="323" x2="754.5" y2="565" stroke="#bdbdbd" stroke-dasharray="3 3"/>
<line x1="785.5" y1="323" x2="785.5" y2="565" stroke="#bdbdbd" stroke-dasharray="3 3"/>
<line x1="816.5" y1="323" x2="816.5" y2="565" stroke="#bdbdbd" stroke-dasharray="3 3"/>
<line x1="879.5" y1="323" x2="879.5" y2="565" stroke="#bdbdbd" stroke-dasharray="3 3"/>
<line x1="910.5" y1="323" x2="910.5" y2="565" stroke="#bdbdbd" stroke-dasharray="3 3"/>
<line x1="941.5" y1="323" x2="941.5" y2="565" stroke="#bdbdbd" stroke-dasharray="3 3"/>
<line x1="972.5" y1="323" x2="972.5" y2="565" stroke="#bdbdbd" stroke-dasharray="3 3"/>
<line x1="1034.5" y1="323" x2="1034.5" y2="565" stroke="#bdbdbd" stroke-dasharray="3 3"/>
<line x1="1066.5" y1="323" x2="1066.5" y2="565" stroke="#bdbdbd" stroke-dasharray="3 3"/>
<line x1="1097.5" y1="323" x2="1097.5" y2="565" stroke="#bdbdbd" stroke-dasharray="3 3"/>
<line x1="1128.5" y1="323" x2="1128.5" y2="565" stroke="#bdbdbd" stroke-dasharray="3 3"/>
<line x1="1190.5" y1="323" x2="1190.5" y2="565" stroke="#bdbdbd" stroke-dasharray="3 3"/>
<line x1="1221.5" y1="323" x2="1221.5" y2="565" stroke="#bdbdbd" stroke-dasharray="3 3"/>
<line x1="1253.5" y1="323" x2="1253.5" y2="565" stroke="#bdbdbd" stroke-dasharray="3 3"/>
<line x1="1284.5" y1="323" x2="1284.5" y2="565" stroke="#bdbdbd" stroke-dasharray="3 3"/>
<line x1="1346.5" y1="323" x2="1346.5" y2="565" stroke="#bdbdbd" stroke-dasharray="3 3"/>
<line x1="692.5" y1="323" x2="692.5" y2="565" stroke="#ffffff" stroke-dasharray="3 3"/>
<line x1="848.5" y1="323" x2="848.5" y2="565" stroke="#ffffff" stroke-dasharray="3 3"/>
<line x1="1003.5" y1="323" x2="1003.5" y2="565" stroke="#ffffff" stroke-dasharray="3 3"/>
<line x1="1159.5" y1="323" x2="1159.5" y2="565" stroke="#ffffff" stroke-dasharray="3 3"/>
<line x1="1315.5" y1="323" x2="1315.5" y2="565" stroke="#ffffff" stroke-dasharray="3 3"/>
</g>
<g fill="#fa1a1a"><rect x="694" y="443.00" width="2" height="23.73"/><rect x="700" y="434.27" width="2" height="8.73"/><rect x="710" y="425.55" width="2" height="17.45"/><rect x="716" y="409.85" width="2" height="33.15"/><rect x="722" y="418.05" width="2" height="24.95"/><rect x="728" y="409.85" width="2" height="33.15"/><rect x="732" y="428.69" width="2" height="14.31"/><rect x="738" y="408.62" width="2" height="34.38"/><rect x="744" y="443.00" width="2" height="13.09"/><rect x="750" y="443.00" width="2" height="16.93"/><rect x="756" y="443.00" width="2" height="54.97"/><rect x="760" y="443.00" width="2" height="67.53"/><rect x="766" y="443.00" width="2" height="86.90"/><rect x="772" y="443.00" width="2" height="73.81"/><rect x="778" y="443.00" width="2" height="39.96"/><rect x="784" y="443.00" width="2" height="71.89"/><rect x="788" y="443.00" width="2" height="43.10"/><rect x="794" y="429.91" width="2" height="13.09"/><rect x="800" y="425.55" width="2" height="17.45"/><rect x="806" y="411.76" width="2" height="31.24"/><rect x="812" y="406.18" width="2" height="36.82"/><rect x="816" y="425.55" width="2" height="17.45"/><rect x="822" y="418.05" width="2" height="24.95"/><rect x="828" y="412.99" width="2" height="30.01"/><rect x="834" y="443.00" width="2" height="30.71"/><rect x="844" y="443.00" width="2" height="2.44"/><rect x="850" y="443.00" width="2" height="8.20"/><rect x="856" y="443.00" width="2" height="11.17"/><rect x="862" y="442.13" width="2" height="0.87"/><rect x="872" y="434.27" width="2" height="8.73"/><rect x="878" y="428.69" width="2" height="14.31"/><rect x="884" y="416.13" width="2" height="26.87"/><rect x="890" y="436.72" width="2" height="6.28"/><rect x="900" y="443.00" width="2" height="11.87"/><rect x="906" y="443.00" width="2" height="0.87"/><rect x="912" y="443.00" width="2" height="35.60"/><rect x="918" y="443.00" width="2" height="9.42"/><rect x="928" y="427.99" width="2" height="15.01"/><rect x="934" y="419.79" width="2" height="23.21"/><rect x="940" y="431.13" width="2" height="11.87"/><rect x="946" y="441.25" width="2" height="1.75"/><rect x="950" y="443.00" width="2" height="14.31"/><rect x="956" y="421.19" width="2" height="21.81"/><rect x="962" y="443.00" width="2" height="20.59"/><rect x="968" y="443.00" width="2" height="16.93"/><rect x="974" y="424.33" width="2" height="18.67"/><rect x="978" y="443.00" width="2" height="26.18"/><rect x="984" y="431.13" width="2" height="11.87"/><rect x="990" y="424.33" width="2" height="18.67"/><rect x="996" y="439.86" width="2" height="3.14"/><rect x="1002" y="443.00" width="2" height="23.73"/><rect x="1006" y="443.00" width="2" height="10.64"/><rect x="1012" y="442.13" width="2" height="0.87"/><rect x="1018" y="429.91" width="2" height="13.09"/><rect x="1024" y="414.21" width="2" height="28.79"/><rect x="1034" y="443.00" width="2" height="5.58"/><rect x="1040" y="434.27" width="2" height="8.73"/><rect x="1046" y="443.00" width="2" height="25.65"/><rect x="1052" y="443.00" width="2" height="13.09"/><rect x="1062" y="441.60" width="2" height="1.40"/><rect x="1068" y="443.00" width="2" height="9.95"/><rect x="1074" y="443.00" width="2" height="40.66"/><rect x="1080" y="443.00" width="2" height="18.15"/><rect x="1090" y="443.00" width="2" height="1.40"/><rect x="1096" y="443.00" width="2" height="17.45"/><rect x="1102" y="421.71" width="2" height="21.29"/><rect x="1108" y="403.56" width="2" height="39.44"/><rect x="1118" y="436.72" width="2" height="6.28"/><rect x="1124" y="443.00" width="2" height="3.14"/><rect x="1130" y="443.00" width="2" height="36.82"/><rect x="1136" y="443.00" width="2" height="15.70"/><rect x="1140" y="443.00" width="2" height="38.74"/><rect x="1146" y="443.00" width="2" height="1.40"/><rect x="1152" y="418.57" width="2" height="24.43"/><rect x="1158" y="434.27" width="2" height="8.73"/><rect x="1164" y="416.13" width="2" height="26.87"/><rect x="1168" y="439.86" width="2" height="3.14"/><rect x="1174" y="376.17" width="2" height="66.83"/><rect x="1180" y="434.80" width="2" height="8.20"/><rect x="1186" y="443.00" width="2" height="7.50"/><rect x="1192" y="441.60" width="2" height="1.40"/><rect x="1196" y="443.00" width="2" height="8.20"/><rect x="1202" y="443.00" width="2" height="15.70"/><rect x="1208" y="443.00" width="2" height="34.38"/><rect x="1214" y="443.00" width="2" height="18.15"/><rect x="1220" y="443.00" width="2" height="44.32"/><rect x="1224" y="443.00" width="2" height="33.68"/><rect x="1230" y="443.00" width="2" height="33.68"/><rect x="1236" y="443.00" width="2" height="41.88"/><rect x="1242" y="443.00" width="2" height="20.07"/><rect x="1252" y="412.99" width="2" height="30.01"/><rect x="1258" y="426.77" width="2" height="16.23"/><rect x="1264" y="443.00" width="2" height="9.42"/><rect x="1270" y="443.00" width="2" height="19.37"/><rect x="1280" y="443.00" width="2" height="16.93"/><rect x="1286" y="443.00" width="2" height="2.44"/><rect x="1292" y="383.67" width="2" height="59.33"/><rect x="1298" y="422.93" width="2" height="20.07"/><rect x="1308" y="397.98" width="2" height="45.02"/><rect x="1314" y="443.00" width="2" height="3.66"/><rect x="1320" y="437.94" width="2" height="5.06"/><rect x="1326" y="443.00" width="2" height="2.44"/><rect x="1336" y="443.00" width="2" height="19.37"/><rect x="1342" y="443.00" width="2" height="11.17"/></g>
<g fill="#b83434"><rect x="691" y="443.00" width="2" height="65.61"/><rect x="697" y="413.68" width="2" height="29.32"/><rect x="703" y="434.80" width="2" height="8.20"/><rect x="707" y="443.00" width="2" height="36.82"/><rect x="713" y="436.72" width="2" height="6.28"/><rect x="719" y="443.00" width="2" height="26.87"/><rect x="725" y="416.13" width="2" height="26.87"/><rect x="735" y="419.79" width="2" height="23.21"/><rect x="741" y="439.86" width="2" height="3.14"/><rect x="747" y="443.00" width="2" height="15.01"/><rect x="753" y="443.00" width="2" height="15.70"/><rect x="763" y="443.00" width="2" height="55.67"/><rect x="769" y="443.00" width="2" height="95.98"/><rect x="775" y="443.00" width="2" height="58.81"/><rect x="781" y="443.00" width="2" height="61.95"/><rect x="791" y="443.00" width="2" height="15.01"/><rect x="797" y="443.00" width="2" height="5.58"/><rect x="803" y="399.38" width="2" height="43.62"/><rect x="809" y="409.85" width="2" height="33.15"/><rect x="819" y="419.79" width="2" height="23.21"/><rect x="825" y="418.57" width="2" height="24.43"/><rect x="831" y="434.27" width="2" height="8.73"/><rect x="837" y="443.00" width="2" height="39.96"/><rect x="841" y="410.89" width="2" height="32.11"/><rect x="847" y="443.00" width="2" height="15.01"/><rect x="853" y="443.00" width="2" height="11.17"/><rect x="859" y="443.00" width="2" height="25.65"/><rect x="865" y="443.00" width="2" height="2.44"/><rect x="869" y="440.21" width="2" height="2.79"/><rect x="875" y="443.00" width="2" height="14.31"/><rect x="881" y="431.83" width="2" height="11.17"/><rect x="887" y="443.00" width="2" height="2.44"/><rect x="893" y="443.00" width="2" height="12.56"/><rect x="897" y="442.13" width="2" height="0.87"/><rect x="903" y="419.79" width="2" height="23.21"/><rect x="909" y="425.55" width="2" height="17.45"/><rect x="915" y="438.81" width="2" height="4.19"/><rect x="921" y="442.13" width="2" height="0.87"/><rect x="925" y="443.00" width="2" height="6.81"/><rect x="931" y="427.99" width="2" height="15.01"/><rect x="937" y="443.00" width="2" height="19.37"/><rect x="943" y="443.00" width="2" height="6.81"/><rect x="953" y="443.00" width="2" height="39.44"/><rect x="959" y="412.99" width="2" height="30.01"/><rect x="965" y="426.77" width="2" height="16.23"/><rect x="971" y="413.68" width="2" height="29.32"/><rect x="981" y="443.00" width="2" height="30.01"/><rect x="987" y="426.07" width="2" height="16.93"/><rect x="993" y="443.00" width="2" height="9.42"/><rect x="999" y="419.79" width="2" height="23.21"/><rect x="1009" y="443.00" width="2" height="34.38"/><rect x="1015" y="443.00" width="2" height="3.14"/><rect x="1021" y="443.00" width="2" height="1.40"/><rect x="1027" y="443.00" width="2" height="16.23"/><rect x="1031" y="399.20" width="2" height="43.80"/><rect x="1037" y="408.10" width="2" height="34.90"/><rect x="1043" y="443.00" width="2" height="28.09"/><rect x="1049" y="427.99" width="2" height="15.01"/><rect x="1055" y="441.60" width="2" height="1.40"/><rect x="1059" y="443.00" width="2" height="1.40"/><rect x="1065" y="443.00" width="2" height="1.40"/><rect x="1071" y="443.00" width="2" height="1.40"/><rect x="1077" y="418.05" width="2" height="24.95"/><rect x="1083" y="431.13" width="2" height="11.87"/><rect x="1087" y="414.21" width="2" height="28.79"/><rect x="1093" y="443.00" width="2" height="21.29"/><rect x="1099" y="438.81" width="2" height="4.19"/><rect x="1105" y="443.00" width="2" height="14.31"/><rect x="1111" y="441.60" width="2" height="1.40"/><rect x="1115" y="434.80" width="2" height="8.20"/><rect x="1121" y="427.99" width="2" height="15.01"/><rect x="1127" y="443.00" width="2" height="16.93"/><rect x="1133" y="443.00" width="2" height="19.37"/><rect x="1143" y="429.21" width="2" height="13.79"/><rect x="1149" y="431.83" width="2" height="11.17"/><rect x="1155" y="443.00" width="2" height="11.17"/><rect x="1161" y="368.66" width="2" height="74.34"/><rect x="1171" y="431.83" width="2" height="11.17"/><rect x="1177" y="418.05" width="2" height="24.95"/><rect x="1183" y="443.00" width="2" height="15.70"/><rect x="1189" y="443.00" width="2" height="21.29"/><rect x="1199" y="441.60" width="2" height="1.40"/><rect x="1205" y="443.00" width="2" height="6.81"/><rect x="1211" y="443.00" width="2" height="29.32"/><rect x="1217" y="443.00" width="2" height="20.59"/><rect x="1227" y="443.00" width="2" height="23.73"/><rect x="1233" y="443.00" width="2" height="6.28"/><rect x="1239" y="443.00" width="2" height="16.93"/><rect x="1245" y="443.00" width="2" height="14.31"/><rect x="1249" y="443.00" width="2" height="21.29"/><rect x="1255" y="443.00" width="2" height="4.36"/><rect x="1261" y="443.00" width="2" height="44.32"/><rect x="1267" y="443.00" width="2" height="34.38"/><rect x="1273" y="443.00" width="2" height="16.93"/><rect x="1277" y="443.00" width="2" height="12.56"/><rect x="1283" y="443.00" width="2" height="20.07"/><rect x="1289" y="443.00" width="2" height="3.14"/><rect x="1295" y="438.81" width="2" height="4.19"/><rect x="1301" y="418.57" width="2" height="24.43"/><rect x="1305" y="443.00" width="2" height="11.17"/><rect x="1311" y="438.81" width="2" height="4.19"/><rect x="1317" y="443.00" width="2" height="3.14"/><rect x="1323" y="431.13" width="2" height="11.87"/><rect x="1329" y="427.99" width="2" height="15.01"/><rect x="1333" y="433.05" width="2" height="9.95"/><rect x="1339" y="439.86" width="2" height="3.14"/><rect x="1345" y="429.91" width="2" height="13.09"/></g>
<rect x="691" y="442" width="656" height="2" fill="#44e034"/>
<g shape-rendering="crispEdges" stroke="#000">
<line x1="683.5" y1="326" x2="683.5" y2="560"/>
<line x1="679" y1="556.5" x2="684" y2="556.5"/>
<line x1="675" y1="547.5" x2="684" y2="547.5"/>
<line x1="679" y1="538.5" x2="684" y2="538.5"/>
<line x1="679" y1="530.5" x2="684" y2="530.5"/>
<line x1="679" y1="521.5" x2="684" y2="521.5"/>
<line x1="675" y1="512.5" x2="684" y2="512.5"/>
<line x1="679" y1="504.5" x2="684" y2="504.5"/>
<line x1="679" y1="495.5" x2="684" y2="495.5"/>
<line x1="679" y1="486.5" x2="684" y2="486.5"/>
<line x1="675" y1="477.5" x2="684" y2="477.5"/>
<line x1="679" y1="469.5" x2="684" y2="469.5"/>
<line x1="679" y1="460.5" x2="684" y2="460.5"/>
<line x1="679" y1="451.5" x2="684" y2="451.5"/>
<line x1="675" y1="443.5" x2="684" y2="443.5"/>
<line x1="679" y1="434.5" x2="684" y2="434.5"/>
<line x1="679" y1="425.5" x2="684" y2="425.5"/>
<line x1="679" y1="416.5" x2="684" y2="416.5"/>
<line x1="675" y1="408.5" x2="684" y2="408.5"/>
<line x1="679" y1="399.5" x2="684" y2="399.5"/>
<line x1="679" y1="390.5" x2="684" y2="390.5"/>
<line x1="679" y1="381.5" x2="684" y2="381.5"/>
<line x1="675" y1="373.5" x2="684" y2="373.5"/>
<line x1="679" y1="364.5" x2="684" y2="364.5"/>
<line x1="679" y1="355.5" x2="684" y2="355.5"/>
<line x1="679" y1="347.5" x2="684" y2="347.5"/>
<line x1="675" y1="338.5" x2="684" y2="338.5"/>
<line x1="679" y1="329.5" x2="684" y2="329.5"/>
<line x1="692" y1="569.5" x2="1347" y2="569.5"/>
<line x1="692.5" y1="569" x2="692.5" y2="578"/>
<line x1="723.5" y1="569" x2="723.5" y2="574"/>
<line x1="754.5" y1="569" x2="754.5" y2="574"/>
<line x1="785.5" y1="569" x2="785.5" y2="574"/>
<line x1="816.5" y1="569" x2="816.5" y2="574"/>
<line x1="848.5" y1="569" x2="848.5" y2="578"/>
<line x1="879.5" y1="569" x2="879.5" y2="574"/>
<line x1="910.5" y1="569" x2="910.5" y2="574"/>
<line x1="941.5" y1="569" x2="941.5" y2="574"/>
<line x1="972.5" y1="569" x2="972.5" y2="574"/>
<line x1="1003.5" y1="569" x2="1003.5" y2="578"/>
<line x1="1034.5" y1="569" x2="1034.5" y2="574"/>
<line x1="1066.5" y1="569" x2="1066.5" y2="574"/>
<line x1="1097.5" y1="569" x2="1097.5" y2="574"/>
<line x1="1128.5" y1="569" x2="1128.5" y2="574"/>
<line x1="1159.5" y1="569" x2="1159.5" y2="578"/>
<line x1="1190.5" y1="569" x2="1190.5" y2="574"/>
<line x1="1221.5" y1="569" x2="1221.5" y2="574"/>
<line x1="1253.5" y1="569" x2="1253.5" y2="574"/>
<line x1="1284.5" y1="569" x2="1284.5" y2="574"/>
<line x1="1315.5" y1="569" x2="1315.5" y2="578"/>
<line x1="1346.5" y1="569" x2="1346.5" y2="574"/>
</g>
<text x="671.5" y="552.0" font-family="Liberation Sans" font-size="12" text-anchor="end">-6</text>
<text x="671.5" y="517.1" font-family="Liberation Sans" font-size="12" text-anchor="end">-4</text>
<text x="671.5" y="482.2" font-family="Liberation Sans" font-size="12" text-anchor="end">-2</text>
<text x="671.5" y="447.3" font-family="Liberation Sans" font-size="12" text-anchor="end">0</text>
<text x="671.5" y="412.4" font-family="Liberation Sans" font-size="12" text-anchor="end">2</text>
<text x="671.5" y="377.5" font-family="Liberation Sans" font-size="12" text-anchor="end">4</text>
<text x="671.5" y="342.6" font-family="Liberation Sans" font-size="12" text-anchor="end">6</text>
<text x="693.8" y="590" font-family="Liberation Sans" font-size="12" text-anchor="middle">0</text>
<text x="849.5" y="590" font-family="Liberation Sans" font-size="12" text-anchor="middle">50</text>
<text x="1005.3" y="590" font-family="Liberation Sans" font-size="12" text-anchor="middle">100</text>
<text x="1161.0" y="590" font-family="Liberation Sans" font-size="12" text-anchor="middle">150</text>
<text x="1316.8" y="590" font-family="Liberation Sans" font-size="12" text-anchor="middle">200</text>
<text transform="translate(655,444.5) rotate(-90)" font-family="Liberation Sans" font-weight="bold" font-size="13.2" text-anchor="middle">delta I(t)/sd</text>
</svg>
<div class="t" style="left:0px;top:0px;width:1369px;height:22px;line-height:22px;text-align:center;font-weight:bold;font-size:12.75px;line-height:21px">Developed by Emre Brookes, Javier P&eacute;rez, Patrice Vachette and Mattia Rocco (see J. App. Cryst. 46:1823-1833, 2013)</div>
<div style="left:0px;top:21px;width:1369px;height:1px;background:#d2d6dc"></div>
<div style="left:0px;top:22px;width:1369px;height:1px;background:#2f5c5c"></div>
<div style="left:0px;top:23px;width:1369px;height:1px;background:#acdcd2"></div>
<div class="t" style="left:0px;top:25px;width:632px;height:18px;line-height:18px;text-align:center;font-weight:bold;font-size:12.4px">Data files</div>
<div style="left:0px;top:48px;width:12px;height:12px;background:#fff;border-top:2px solid #000;border-left:2px solid #000;border-bottom:1px solid #e8e8e8;border-right:1px solid #e8e8e8;box-sizing:border-box"></div>
<div class="t" style="left:18px;top:45px;width:40px;height:18px;line-height:18px;text-align:left;font-size:12.4px">Lock</div>
<div style="left:54px;top:45px;width:579px;height:19px;background:#fff;border-bottom:1px solid #307070;box-sizing:border-box"></div>
<div class="t" style="left:54px;top:45px;width:578px;height:18px;line-height:18px;text-align:center;font-size:12.4px;letter-spacing:0.1px">/home/ultrascan/HPLC_SAXS/Aldolase_25_11_SOMO/I_t_sd3/Baseline</div>
<div style="left:1px;top:64px;width:157px;height:24px;background:#00dede;border-top:1px solid #8cf6f6;border-left:1px solid #8cf6f6;border-bottom:1px solid #000;border-right:1px solid #000;box-sizing:border-box;"></div>
<div class="t dis" style="left:1px;top:64px;width:157px;height:24px;line-height:24px;text-align:center;font-size:12.4px;">Add files</div>
<div style="left:158px;top:64px;width:159px;height:24px;background:#00dede;border-top:1px solid #8cf6f6;border-left:1px solid #8cf6f6;border-bottom:1px solid #000;border-right:1px solid #000;box-sizing:border-box;"></div>
<div class="t dis" style="left:158px;top:64px;width:159px;height:24px;line-height:24px;text-align:center;font-size:12.4px;">Similar</div>
<div style="left:317px;top:64px;width:158px;height:24px;background:#00dede;border-top:1px solid #8cf6f6;border-left:1px solid #8cf6f6;border-bottom:1px solid #000;border-right:1px solid #000;box-sizing:border-box;"></div>
<div class="t dis" style="left:317px;top:64px;width:158px;height:24px;line-height:24px;text-align:center;font-size:12.4px;">Concentrations</div>
<div style="left:475px;top:64px;width:158px;height:24px;background:#00dede;border-top:1px solid #8cf6f6;border-left:1px solid #8cf6f6;border-bottom:1px solid #000;border-right:1px solid #000;box-sizing:border-box;"></div>
<div class="t dis" style="left:475px;top:64px;width:158px;height:24px;line-height:24px;text-align:center;font-size:12.4px;">Remove files</div>
<div style="left:0px;top:88px;width:633px;height:175px;background:#fff;border-top:2px solid #000;border-left:2px solid #000;border-bottom:1px solid #e0e0e0;border-right:1px solid #e0e0e0;box-sizing:border-box"></div>
<div style="left:2px;top:90px;width:613px;height:172px;overflow:hidden">
<div class="t" style="left:3px;top:0px;height:18px;line-height:18px;font-size:12.4px;letter-spacing:0.14px">aldo_pH7p5_Elution1_0022__It_q0_0062862-bl8_54486e-09-1_5816896e-05s</div>
<div class="t" style="left:3px;top:18px;height:18px;line-height:18px;font-size:12.4px;letter-spacing:0.14px">aldo_pH7p5_Elution1_0022__It_q0_00685768-bl1_5025796e-09-1_4897117e-05s</div>
<div class="t" style="left:3px;top:36px;height:18px;line-height:18px;font-size:12.4px;letter-spacing:0.14px">aldo_pH7p5_Elution1_0022__It_q0_00742915-bl4_0766788e-10-1_2117645e-05s</div>
<div class="t" style="left:3px;top:54px;height:18px;line-height:18px;font-size:12.4px;letter-spacing:0.14px">aldo_pH7p5_Elution1_0022__It_q0_00800062-bl-1_4330222e-08-1_2800266e-05s</div>
<div class="t" style="left:3px;top:72px;height:18px;line-height:18px;font-size:12.4px;letter-spacing:0.14px">aldo_pH7p5_Elution1_0022__It_q0_00857209-bl-3_2996883e-08-1_3029513e-05s</div>
<div class="t" style="left:3px;top:90px;height:18px;line-height:18px;font-size:12.4px;letter-spacing:0.14px">aldo_pH7p5_Elution1_0022__It_q0_00914356-bl-4_1552261e-08-1_3358012e-05s</div>
<div class="t" style="left:3px;top:108px;height:18px;line-height:18px;font-size:12.4px;letter-spacing:0.14px">aldo_pH7p5_Elution1_0022__It_q0_00971503-bl-5_9215578e-08-1_3795104e-05s</div>
<div style="left:0;top:126px;width:613px;height:18px;background:#000080"></div>
<div class="t" style="left:3px;top:126px;height:18px;line-height:18px;font-size:12.4px;color:#fff;letter-spacing:0.14px">aldo_pH7p5_Elution1_0022__It_q0_01028650-bl-7_1105546e-08-1_4150121e-05s</div>
<div class="t" style="left:3px;top:144px;height:18px;line-height:18px;font-size:12.4px;letter-spacing:0.14px">aldo_pH7p5_Elution1_0022__It_q0_01085797-bl-8_4462301e-08-1_4477025e-05s</div>
<div class="t" style="left:3px;top:162px;height:18px;line-height:18px;font-size:12.4px;letter-spacing:0.14px">aldo_pH7p5_Elution1_0022__It_q0_01142944-bl-9_6208334e-08-1_4792038e-05s</div>
</div>
<div style="left:616px;top:90px;width:16px;height:172px;background:repeating-conic-gradient(#d0d0d0 0 25%, #f0f0f0 0 50%) 0 0/2px 2px"></div>
<div style="left:616px;top:91px;width:16px;height:15px;background:#c6c6c6;border-top:1px solid #f4f4f4;border-left:1px solid #f4f4f4;border-bottom:1px solid #606060;border-right:1px solid #606060;box-sizing:border-box"></div>
<svg style="left:616px;top:91px" width="16" height="15"><path d="M3.5 10 L8 5 L12.5 10 Z" fill="#000"/></svg>
<div style="left:616px;top:106px;width:16px;height:9px;background:#c6c6c6;border-top:1px solid #f4f4f4;border-left:1px solid #f4f4f4;border-bottom:1px solid #606060;border-right:1px solid #606060;box-sizing:border-box"></div>
<div style="left:616px;top:246px;width:16px;height:16px;background:#c6c6c6;border-top:1px solid #f4f4f4;border-left:1px solid #f4f4f4;border-bottom:1px solid #606060;border-right:1px solid #606060;box-sizing:border-box"></div>
<svg style="left:616px;top:246px" width="16" height="16"><path d="M3.5 6 L8 11 L12.5 6 Z" fill="#000"/></svg>
<div style="left:0px;top:278px;width:80px;height:22px;background:#00dede;border-top:1px solid #8cf6f6;border-left:1px solid #8cf6f6;border-bottom:1px solid #000;border-right:1px solid #000;box-sizing:border-box;"></div>
<div class="t dis" style="left:0px;top:278px;width:80px;height:22px;line-height:22px;text-align:center;font-size:12.4px;">Sel. all</div>
<div style="left:80px;top:278px;width:110px;height:22px;background:#00dede;border-top:1px solid #8cf6f6;border-left:1px solid #8cf6f6;border-bottom:1px solid #000;border-right:1px solid #000;box-sizing:border-box;"></div>
<div class="t dis" style="left:80px;top:278px;width:110px;height:22px;line-height:22px;text-align:center;font-size:12.4px;">Sel. Unselected</div>
<div style="left:190px;top:278px;width:443px;height:22px;background:#00dede;border-top:1px solid #8cf6f6;border-left:1px solid #8cf6f6;border-bottom:1px solid #000;border-right:1px solid #000;box-sizing:border-box;"></div>
<div class="t dis" style="left:606px;top:278px;height:22px;line-height:22px;font-size:12.4px">ve</div>
<div style="left:0px;top:300px;width:110px;height:24px;background:#00dede;border-top:1px solid #8cf6f6;border-left:1px solid #8cf6f6;border-bottom:1px solid #000;border-right:1px solid #000;box-sizing:border-box;"></div>
<div class="t dis" style="left:0px;top:300px;width:110px;height:24px;line-height:24px;text-align:center;font-size:12.4px;">Normalize</div>
<div style="left:110px;top:300px;width:523px;height:24px;background:#00dede;border-top:1px solid #8cf6f6;border-left:1px solid #8cf6f6;border-bottom:1px solid #000;border-right:1px solid #000;box-sizing:border-box;"></div>
<div class="t dis" style="left:596px;top:300px;height:24px;line-height:24px;font-size:12.4px">Color</div>
<div style="left:0px;top:324px;width:105px;height:24px;background:#00dede;border-top:1px solid #8cf6f6;border-left:1px solid #8cf6f6;border-bottom:1px solid #000;border-right:1px solid #000;box-sizing:border-box;"></div>
<div class="t dis" style="left:0px;top:324px;width:105px;height:24px;line-height:24px;text-align:center;font-size:12.4px;">Bin</div>
<div style="left:105px;top:324px;width:528px;height:24px;background:#00dede;border-top:1px solid #8cf6f6;border-left:1px solid #8cf6f6;border-bottom:1px solid #000;border-right:1px solid #000;box-sizing:border-box;"></div>
<div style="left:0px;top:348px;width:633px;height:23px;background:#00dede;border-top:1px solid #8cf6f6;border-left:1px solid #8cf6f6;border-bottom:1px solid #000;border-right:1px solid #000;box-sizing:border-box;"></div>
<div class="t en" style="left:0px;top:348px;width:633px;height:23px;line-height:23px;text-align:center;font-size:12.4px;text-align:left;text-indent:27px">Concentration load</div>
<div style="left:0px;top:415px;width:633px;height:20px;background:#fff;border-top:2px solid #000;border-left:2px solid #000;border-bottom:1px solid #d8d8d8;border-right:1px solid #d8d8d8;box-sizing:border-box;border:none"></div>
<div class="t" style="left:85px;top:415px;height:20px;line-height:20px;font-size:12.4px">/home/ultrascan/HPLC_SAXS/Aldolase_25_11_SOMO/I_t_sd3/Baseline</div>
<div style="left:0px;top:435px;width:633px;height:90px;background:#fff;border-top:2px solid #000;border-left:2px solid #000;border-bottom:1px solid #d8d8d8;border-right:1px solid #d8d8d8;box-sizing:border-box;"></div>
<div style="left:0px;top:540px;width:612px;height:24px;background:#00dede;border-top:1px solid #8cf6f6;border-left:1px solid #8cf6f6;border-bottom:1px solid #000;border-right:1px solid #000;box-sizing:border-box;"></div>
<div class="t dis" style="left:0px;top:540px;width:612px;height:24px;line-height:24px;text-align:center;font-size:12.4px;text-align:left;text-indent:76px">Select all</div>
<div style="left:612px;top:540px;width:21px;height:24px;background:#00dede;border-top:1px solid #8cf6f6;border-left:1px solid #8cf6f6;border-bottom:1px solid #000;border-right:1px solid #000;box-sizing:border-box;"></div>
<div class="t dis" style="left:612px;top:540px;height:24px;line-height:24px;font-size:12.4px">e</div>
<div style="left:0px;top:564px;width:316px;height:24px;background:#00dede;border-top:1px solid #8cf6f6;border-left:1px solid #8cf6f6;border-bottom:1px solid #000;border-right:1px solid #000;box-sizing:border-box;"></div>
<div class="t dis" style="left:0px;top:564px;width:316px;height:24px;line-height:24px;text-align:center;font-size:12.4px;">Show</div>
<div style="left:316px;top:564px;width:317px;height:24px;background:#00dede;border-top:1px solid #8cf6f6;border-left:1px solid #8cf6f6;border-bottom:1px solid #000;border-right:1px solid #000;box-sizing:border-box;"></div>
<div class="t dis" style="left:316px;top:564px;width:317px;height:24px;line-height:24px;text-align:center;font-size:12.4px;">Show only</div>
<div class="t" style="left:1px;top:590px;width:632px;height:18px;line-height:18px;text-align:center;font-weight:bold;font-size:12.4px">Messages</div>
<div class="t" style="left:7px;top:612px;height:18px;line-height:18px;font-size:12.4px"><u>F</u>ile</div>
<div style="left:0px;top:632px;width:633px;height:2px;background:#307878"></div>
<div style="left:0px;top:635px;width:633px;height:111px;background:#fff;border-top:2px solid #000;border-left:2px solid #000;border-bottom:1px solid #d8d8d8;border-right:1px solid #d8d8d8;box-sizing:border-box;"></div>
<div style="left:0px;top:747px;width:166px;height:23px;background:#00dede;border-top:1px solid #8cf6f6;border-left:1px solid #8cf6f6;border-bottom:1px solid #000;border-right:1px solid #000;box-sizing:border-box;"></div>
<div class="t en" style="left:0px;top:747px;width:166px;height:23px;line-height:23px;text-align:center;font-size:12.4px;">Help</div>
<div style="left:166px;top:747px;width:166px;height:23px;background:#00dede;border-top:1px solid #8cf6f6;border-left:1px solid #8cf6f6;border-bottom:1px solid #000;border-right:1px solid #000;box-sizing:border-box;"></div>
<div class="t dis" style="left:166px;top:747px;width:166px;height:23px;line-height:23px;text-align:center;font-size:12.4px;">Options</div>
<div style="left:332px;top:747px;width:704px;height:23px;background:#c6c6c6"></div>
<div style="left:997px;top:747px;width:1px;height:23px;background:#f0f0f0"></div>
<div style="left:1036px;top:747px;width:333px;height:23px;background:#00dede;border-top:1px solid #8cf6f6;border-left:1px solid #8cf6f6;border-bottom:1px solid #000;border-right:1px solid #000;box-sizing:border-box;"></div>
<div class="t en" style="left:1036px;top:747px;width:333px;height:23px;line-height:23px;text-align:center;font-size:12.4px;">Close</div>
<div style="left:634px;top:606px;width:12px;height:12px;background:#fff;border-top:2px solid #000;border-left:2px solid #000;border-bottom:1px solid #e8e8e8;border-right:1px solid #e8e8e8;box-sizing:border-box"></div>
<div class="t" style="left:651px;top:603px;width:60px;height:18px;line-height:18px;text-align:left;font-size:12.4px">Reverse</div>
<div style="left:878px;top:606px;width:12px;height:12px;background:#fff;border-top:2px solid #000;border-left:2px solid #000;border-bottom:1px solid #e8e8e8;border-right:1px solid #e8e8e8;box-sizing:border-box"></div>
<svg style="left:878px;top:606px" width="12" height="12"><path d="M2.5 6.5 L5 9.5 L10 3" stroke="#000" stroke-width="2.2" fill="none"/></svg>
<div class="t" style="left:896px;top:603px;width:150px;height:18px;line-height:18px;text-align:left;font-size:12.4px">Use standard deviations</div>
<div style="left:1124px;top:606px;width:12px;height:12px;background:#fff;border-top:2px solid #000;border-left:2px solid #000;border-bottom:1px solid #e8e8e8;border-right:1px solid #e8e8e8;box-sizing:border-box"></div>
<div class="t" style="left:1142px;top:603px;width:80px;height:18px;line-height:18px;text-align:left;font-size:12.4px">By percent</div>
<div style="left:697px;top:622px;width:80px;height:22px;background:#00dede;border-top:1px solid #8cf6f6;border-left:1px solid #8cf6f6;border-bottom:1px solid #000;border-right:1px solid #000;box-sizing:border-box;"></div>
<div class="t dis" style="left:697px;top:622px;width:80px;height:22px;line-height:22px;text-align:center;font-size:12.4px;font-size:11px">&lt;</div>
<div style="left:1225px;top:622px;width:80px;height:22px;background:#00dede;border-top:1px solid #8cf6f6;border-left:1px solid #8cf6f6;border-bottom:1px solid #000;border-right:1px solid #000;box-sizing:border-box;"></div>
<div class="t dis" style="left:1225px;top:622px;width:80px;height:22px;line-height:22px;text-align:center;font-size:12.4px;font-size:11px">&gt;</div>
<div style="left:777px;top:622px;width:447px;height:22px;box-sizing:border-box;border-top:2px solid #8c8c8c;border-bottom:2px solid #ececec;background:#b8b8b8"></div>
<div style="left:777px;top:624px;width:28px;height:18px;background:linear-gradient(90deg,#b4b4b4,#bcbcbc)"></div>
<div style="left:806px;top:624px;width:98px;height:18px;background:linear-gradient(90deg,#c4c4c4,#d8d8d8)"></div>
<div style="left:905px;top:624px;width:135px;height:18px;background:linear-gradient(90deg,#d4d4d4,#b4b4b4)"></div>
<div style="left:1041px;top:624px;width:121px;height:18px;background:linear-gradient(90deg,#acacac,#a0a0a0)"></div>
<div style="left:1163px;top:624px;width:61px;height:18px;background:linear-gradient(90deg,#969696,#8c8c8c)"></div>
<div style="left:805px;top:624px;width:1px;height:18px;background:#ececec"></div>
<div style="left:904px;top:624px;width:1px;height:18px;background:#ececec"></div>
<div style="left:1040px;top:624px;width:1px;height:18px;background:#ececec"></div>
<div style="left:1162px;top:624px;width:1px;height:18px;background:#ececec"></div>
<div class="t" style="left:1305px;top:622px;width:64px;height:22px;line-height:22px;text-align:center;font-size:12.4px">136.801</div>
<div class="t" style="left:632px;top:641px;width:737px;height:18px;line-height:18px;text-align:center;font-weight:bold;font-size:12.4px">EMG</div>
<div style="left:633px;top:658px;width:40px;height:22px;background:#00dede;border-top:1px solid #8cf6f6;border-left:1px solid #8cf6f6;border-bottom:1px solid #000;border-right:1px solid #000;box-sizing:border-box;"></div>
<div class="t dis" style="left:633px;top:658px;width:40px;height:22px;line-height:22px;text-align:center;font-size:12.4px;">3D</div>
<div style="left:673px;top:658px;width:144px;height:22px;background:#00dede;border-top:1px solid #8cf6f6;border-left:1px solid #8cf6f6;border-bottom:1px solid #000;border-right:1px solid #000;box-sizing:border-box;"></div>
<div class="t dis" style="left:673px;top:658px;width:144px;height:22px;line-height:22px;text-align:center;font-size:12.4px;">Concentration reference</div>
<div style="left:817px;top:658px;width:111px;height:22px;background:#00dede;border-top:1px solid #8cf6f6;border-left:1px solid #8cf6f6;border-bottom:1px solid #000;border-right:1px solid #000;box-sizing:border-box;"></div>
<div class="t en" style="left:817px;top:658px;width:111px;height:22px;line-height:22px;text-align:center;font-size:12.4px;">Residuals</div>
<div style="left:928px;top:658px;width:110px;height:22px;background:#00dede;border-top:1px solid #8cf6f6;border-left:1px solid #8cf6f6;border-bottom:1px solid #000;border-right:1px solid #000;box-sizing:border-box;"></div>
<div class="t dis" style="left:928px;top:658px;width:110px;height:22px;line-height:22px;text-align:center;font-size:12.4px;">CorMap Analysis</div>
<div style="left:1038px;top:658px;width:111px;height:22px;background:#00dede;border-top:1px solid #8cf6f6;border-left:1px solid #8cf6f6;border-bottom:1px solid #000;border-right:1px solid #000;box-sizing:border-box;"></div>
<div class="t dis" style="left:1038px;top:658px;width:111px;height:22px;line-height:22px;text-align:center;font-size:12.4px;">Save Plots</div>
<div style="left:1149px;top:658px;width:110px;height:22px;background:#00dede;border-top:1px solid #8cf6f6;border-left:1px solid #8cf6f6;border-bottom:1px solid #000;border-right:1px solid #000;box-sizing:border-box;"></div>
<div class="t en" style="left:1149px;top:658px;width:110px;height:22px;line-height:22px;text-align:center;font-size:12.4px;">Cancel</div>
<div style="left:1259px;top:658px;width:110px;height:22px;background:#00dede;border-top:1px solid #8cf6f6;border-left:1px solid #8cf6f6;border-bottom:1px solid #000;border-right:1px solid #000;box-sizing:border-box;"></div>
<div class="t en" style="left:1259px;top:658px;width:110px;height:22px;line-height:22px;text-align:center;font-size:12.4px;">Keep</div>
<div style="left:633px;top:680px;width:59px;height:22px;background:#00dede;border-top:1px solid #8cf6f6;border-left:1px solid #8cf6f6;border-bottom:1px solid #000;border-right:1px solid #000;box-sizing:border-box;"></div>
<div class="t dis" style="left:633px;top:680px;width:59px;height:22px;line-height:22px;text-align:center;font-size:12.4px;">EMG</div>
<div style="left:692px;top:680px;width:170px;height:22px;background:#00dede;border-top:1px solid #8cf6f6;border-left:1px solid #8cf6f6;border-bottom:1px solid #000;border-right:1px solid #000;box-sizing:border-box;"></div>
<div class="t dis" style="left:692px;top:680px;width:170px;height:22px;line-height:22px;text-align:center;font-size:12.4px;">Global Gaussians</div>
<div style="left:862px;top:680px;width:169px;height:22px;background:#00dede;border-top:1px solid #8cf6f6;border-left:1px solid #8cf6f6;border-bottom:1px solid #000;border-right:1px solid #000;box-sizing:border-box;"></div>
<div class="t dis" style="left:862px;top:680px;width:169px;height:22px;line-height:22px;text-align:center;font-size:12.4px;">Scale Analysis</div>
<div style="left:1031px;top:680px;width:169px;height:22px;background:#00dede;border-top:1px solid #8cf6f6;border-left:1px solid #8cf6f6;border-bottom:1px solid #000;border-right:1px solid #000;box-sizing:border-box;"></div>
<div class="t dis" style="left:1031px;top:680px;width:169px;height:22px;line-height:22px;text-align:center;font-size:12.4px;">Trial make I(q)</div>
<div style="left:1200px;top:680px;width:169px;height:22px;background:#00dede;border-top:1px solid #8cf6f6;border-left:1px solid #8cf6f6;border-bottom:1px solid #000;border-right:1px solid #000;box-sizing:border-box;"></div>
<div class="t dis" style="left:1200px;top:680px;width:169px;height:22px;line-height:22px;text-align:center;font-size:12.4px;">Guinier</div>
<div style="left:633px;top:702px;width:70px;height:22px;background:#00dede;border-top:1px solid #8cf6f6;border-left:1px solid #8cf6f6;border-bottom:1px solid #000;border-right:1px solid #000;box-sizing:border-box;"></div>
<div class="t en" style="left:633px;top:702px;width:70px;height:22px;line-height:22px;text-align:center;font-size:12.4px;">Clear</div>
<div style="left:703px;top:702px;width:50px;height:22px;background:#00dede;border-top:1px solid #8cf6f6;border-left:1px solid #8cf6f6;border-bottom:1px solid #000;border-right:1px solid #000;box-sizing:border-box;"></div>
<div class="t en" style="left:703px;top:702px;width:50px;height:22px;line-height:22px;text-align:center;font-size:12.4px;">New</div>
<div style="left:753px;top:702px;width:50px;height:22px;background:#00dede;border-top:1px solid #8cf6f6;border-left:1px solid #8cf6f6;border-bottom:1px solid #000;border-right:1px solid #000;box-sizing:border-box;"></div>
<div class="t en" style="left:753px;top:702px;width:50px;height:22px;line-height:22px;text-align:center;font-size:12.4px;">Del</div>
<div style="left:803px;top:702px;width:30px;height:22px;background:#00dede;border-top:1px solid #8cf6f6;border-left:1px solid #8cf6f6;border-bottom:1px solid #000;border-right:1px solid #000;box-sizing:border-box;"></div>
<div class="t en" style="left:803px;top:702px;width:30px;height:22px;line-height:22px;text-align:center;font-size:12.4px;font-size:11px">&lt;</div>
<div class="t" style="left:833px;top:702px;width:40px;height:22px;line-height:22px;text-align:center;font-size:12.4px">4 of 4</div>
<div style="left:873px;top:702px;width:30px;height:22px;background:#00dede;border-top:1px solid #8cf6f6;border-left:1px solid #8cf6f6;border-bottom:1px solid #000;border-right:1px solid #000;box-sizing:border-box;"></div>
<div class="t dis" style="left:873px;top:702px;width:30px;height:22px;line-height:22px;text-align:center;font-size:12.4px;font-size:11px">&gt;</div>
<div style="left:903px;top:702px;width:63px;height:22px;border-bottom:2px solid #307878;box-sizing:border-box"></div>
<div style="left:904px;top:706px;width:12px;height:12px;background:#fff;border-top:2px solid #000;border-left:2px solid #000;border-bottom:1px solid #e8e8e8;border-right:1px solid #e8e8e8;box-sizing:border-box"></div>
<div class="t" style="left:921px;top:701px;width:45px;height:20px;line-height:20px;text-align:left;font-size:12.4px">Match</div>
<div style="left:966px;top:702px;width:85px;height:22px;background:#fff;border-top:2px solid #000;border-left:2px solid #000;border-bottom:1px solid #d8d8d8;border-right:1px solid #d8d8d8;box-sizing:border-box;"></div>
<div class="t" style="left:966px;top:702px;width:85px;height:22px;line-height:22px;text-align:center;font-size:12.4px">131.947</div>
<div style="left:1051px;top:702px;width:86px;height:22px;background:#fff;border-top:2px solid #000;border-left:2px solid #000;border-bottom:1px solid #d8d8d8;border-right:1px solid #d8d8d8;box-sizing:border-box;"></div>
<div class="t" style="left:1051px;top:702px;width:86px;height:22px;line-height:22px;text-align:center;font-size:12.4px">5.69162</div>
<div style="left:1137px;top:702px;width:86px;height:22px;background:#fff;border-top:2px solid #000;border-left:2px solid #000;border-bottom:1px solid #d8d8d8;border-right:1px solid #d8d8d8;box-sizing:border-box;"></div>
<div class="t" style="left:1137px;top:702px;width:86px;height:22px;line-height:22px;text-align:center;font-size:12.4px">0.00039112</div>
<div style="left:1223px;top:702px;width:86px;height:22px;background:#fff;border-top:2px solid #000;border-left:2px solid #000;border-bottom:1px solid #d8d8d8;border-right:1px solid #d8d8d8;box-sizing:border-box;"></div>
<div class="t" style="left:1223px;top:702px;width:86px;height:22px;line-height:22px;text-align:center;font-size:12.4px">7.58954</div>
<div style="left:1309px;top:702px;width:60px;height:22px;background:#00dede;border-top:1px solid #8cf6f6;border-left:1px solid #8cf6f6;border-bottom:1px solid #000;border-right:1px solid #000;box-sizing:border-box;"></div>
<div class="t en" style="left:1309px;top:702px;width:60px;height:22px;line-height:22px;text-align:center;font-size:12.4px;">Save</div>
<div style="left:634px;top:729px;width:12px;height:12px;background:#fff;border-top:2px solid #000;border-left:2px solid #000;border-bottom:1px solid #e8e8e8;border-right:1px solid #e8e8e8;box-sizing:border-box"></div>
<svg style="left:634px;top:729px" width="12" height="12"><path d="M2.5 6.5 L5 9.5 L10 3" stroke="#000" stroke-width="2.2" fill="none"/></svg>
<div class="t" style="left:652px;top:724px;width:30px;height:22px;line-height:22px;text-align:left;font-size:12.4px">SD</div>
<div style="left:633px;top:744px;width:48px;height:2px;background:#307878"></div>
<div style="left:681px;top:724px;width:80px;height:22px;background:#00dede;border-top:1px solid #8cf6f6;border-left:1px solid #8cf6f6;border-bottom:1px solid #000;border-right:1px solid #000;box-sizing:border-box;"></div>
<div class="t en" style="left:681px;top:724px;width:80px;height:22px;line-height:22px;text-align:center;font-size:12.4px;">Fit</div>
<div class="t" style="left:761px;top:724px;width:47px;height:22px;line-height:22px;text-align:center;font-size:12.4px">2.5362</div>
<div style="left:808px;top:724px;width:226px;height:22px;background:#fff;border-top:2px solid #000;border-left:2px solid #000;border-bottom:1px solid #d8d8d8;border-right:1px solid #d8d8d8;box-sizing:border-box;"></div>
<div class="t" style="left:808px;top:724px;width:226px;height:22px;line-height:22px;text-align:center;font-size:12.4px">0</div>
<div style="left:1035px;top:724px;width:225px;height:22px;background:#fff;border-top:2px solid #000;border-left:2px solid #000;border-bottom:1px solid #d8d8d8;border-right:1px solid #d8d8d8;box-sizing:border-box;"></div>
<div class="t" style="left:1035px;top:724px;width:225px;height:22px;line-height:22px;text-align:center;font-size:12.4px">210</div>
<div style="left:1260px;top:724px;width:109px;height:22px;background:#00dede;border-top:1px solid #8cf6f6;border-left:1px solid #8cf6f6;border-bottom:1px solid #000;border-right:1px solid #000;box-sizing:border-box;"></div>
<div class="t en" style="left:1260px;top:724px;width:109px;height:22px;line-height:22px;text-align:center;font-size:12.4px;">To produced data</div>
<div style="left:632px;top:633px;width:1px;height:114px;background:#f4f4f4"></div>
<div style="left:135px;top:169px;width:477px;height:398px;box-sizing:border-box;border:1px solid #8fb0cf;border-radius:6px 6px 4px 4px;background:#d6d2cf"></div>
<svg style="left:140px;top:172px" width="18" height="18"><defs><linearGradient id="xg" x1="0" y1="0" x2="0" y2="1"><stop offset="0" stop-color="#c4c4c4"/><stop offset="0.45" stop-color="#8a8a8a"/><stop offset="0.6" stop-color="#2a2a20"/><stop offset="1" stop-color="#4a3e28"/></linearGradient><linearGradient id="og" x1="0" y1="0" x2="0" y2="1"><stop offset="0" stop-color="#f0b0a0"/><stop offset="0.5" stop-color="#e8a018"/><stop offset="1" stop-color="#8a6020"/></linearGradient></defs><ellipse cx="3.2" cy="9.8" rx="1.6" ry="5" fill="url(#og)"/><path d="M2.8 2.2 L14.3 15.4" stroke="url(#xg)" stroke-width="3.4"/><path d="M14.6 1.5 L3.3 15.6" stroke="url(#xg)" stroke-width="2.6"/></svg>
<svg style="left:163px;top:172px" width="17" height="17"><defs><radialGradient id="rg" cx="50%" cy="35%" r="60%"><stop offset="0" stop-color="#f6f6f6"/><stop offset="1" stop-color="#c4c4c4"/></radialGradient></defs><circle cx="8.5" cy="8.5" r="7" fill="url(#rg)" stroke="#a8a8a8" stroke-width="1"/><circle cx="8.5" cy="8.5" r="0.9" fill="#555"/></svg>
<div class="t" style="left:137px;top:171px;width:472px;height:20px;line-height:20px;text-align:center;font-size:12.4px;color:#3a3a3a">US-SOMO: SAXS Hplc: Gaussian Fit</div>
<svg style="left:519.5px;top:172px" width="17" height="17"><circle cx="8.5" cy="8.5" r="7" fill="url(#rg)" stroke="#a4a4a4" stroke-width="1"/><text x="8.5" y="12.5" text-anchor="middle" font-family="Liberation Sans" font-size="11" fill="#333">?</text></svg>
<svg style="left:542.5px;top:172px" width="17" height="17"><circle cx="8.5" cy="8.5" r="7" fill="url(#rg)" stroke="#a4a4a4" stroke-width="1"/><path d="M5.5 7.5 L8.5 10.5 L11.5 7.5" stroke="#333" stroke-width="1.4" fill="none"/></svg>
<svg style="left:565.5px;top:172px" width="17" height="17"><circle cx="8.5" cy="8.5" r="7" fill="url(#rg)" stroke="#a4a4a4" stroke-width="1"/><path d="M5.5 10 L8.5 7 L11.5 10" stroke="#333" stroke-width="1.4" fill="none"/></svg>
<svg style="left:589.0px;top:172px" width="17" height="17"><circle cx="8.5" cy="8.5" r="7" fill="url(#rg)" stroke="#a4a4a4" stroke-width="1"/><path d="M5.5 5.5 L11.5 11.5 M11.5 5.5 L5.5 11.5" stroke="#333" stroke-width="1.4" fill="none"/></svg>
<div style="left:138px;top:193px;width:471px;height:370px;background:#007878"></div>
<div style="left:139px;top:193px;width:470px;height:29px;background:#007878;border:1px solid #000;box-sizing:border-box"></div>
<div style="left:140px;top:220px;width:468px;height:1px;background:#c4c4b8"></div>
<div class="t" style="left:139px;top:193px;width:470px;height:27px;line-height:27px;text-align:center;font-weight:bold;font-size:14.6px;color:#e8ffff">US-SOMO: SAXS Hplc: Gaussian Fit</div>
<div style="left:138px;top:227px;width:471px;height:21px;background:#c6c6c6;border-top:1px solid #9cd0d0;box-sizing:border-box"></div>
<div style="left:138.5px;top:231.5px;width:12px;height:12px;background:#fff;border-top:2px solid #000;border-left:2px solid #000;border-bottom:1px solid #e8e8e8;border-right:1px solid #e8e8e8;box-sizing:border-box"></div>
<div class="t" style="left:161px;top:227px;width:160px;height:21px;line-height:21px;text-align:left;font-size:14.3px">Fix Gaussian centers</div>
<div style="left:324.5px;top:231.5px;width:12px;height:12px;background:#fff;border-top:2px solid #000;border-left:2px solid #000;border-bottom:1px solid #e8e8e8;border-right:1px solid #e8e8e8;box-sizing:border-box"></div>
<div class="t" style="left:347px;top:227px;width:80px;height:21px;line-height:21px;text-align:left;font-size:14.3px">% variation</div>
<div style="left:424px;top:227px;width:49px;height:21px;box-sizing:border-box;background:#c6c6c6;border-top:2px solid #000;border-left:2px solid #000;border-bottom:1px solid #f0f0f0;border-right:1px solid #f0f0f0"></div>
<div class="t" style="left:424px;top:227px;width:49px;height:21px;line-height:21px;text-align:center;font-size:14.3px">5</div>
<div style="left:474px;top:231.5px;width:12px;height:12px;background:#fff;border-top:2px solid #000;border-left:2px solid #000;border-bottom:1px solid #e8e8e8;border-right:1px solid #e8e8e8;box-sizing:border-box"></div>
<div class="t" style="left:496px;top:227px;width:110px;height:21px;line-height:21px;text-align:left;font-size:14.3px">From initial value</div>
<div style="left:138px;top:251px;width:471px;height:21px;background:#c6c6c6;border-top:1px solid #9cd0d0;box-sizing:border-box"></div>
<div style="left:138.5px;top:255.5px;width:12px;height:12px;background:#fff;border-top:2px solid #000;border-left:2px solid #000;border-bottom:1px solid #e8e8e8;border-right:1px solid #e8e8e8;box-sizing:border-box"></div>
<div class="t" style="left:161px;top:251px;width:160px;height:21px;line-height:21px;text-align:left;font-size:14.3px">Fix Gaussian widths</div>
<div style="left:324.5px;top:255.5px;width:12px;height:12px;background:#fff;border-top:2px solid #000;border-left:2px solid #000;border-bottom:1px solid #e8e8e8;border-right:1px solid #e8e8e8;box-sizing:border-box"></div>
<div class="t" style="left:347px;top:251px;width:80px;height:21px;line-height:21px;text-align:left;font-size:14.3px">% variation</div>
<div style="left:424px;top:251px;width:49px;height:21px;box-sizing:border-box;background:#c6c6c6;border-top:2px solid #000;border-left:2px solid #000;border-bottom:1px solid #f0f0f0;border-right:1px solid #f0f0f0"></div>
<div class="t" style="left:424px;top:251px;width:49px;height:21px;line-height:21px;text-align:center;font-size:14.3px">5</div>
<div style="left:474px;top:255.5px;width:12px;height:12px;background:#fff;border-top:2px solid #000;border-left:2px solid #000;border-bottom:1px solid #e8e8e8;border-right:1px solid #e8e8e8;box-sizing:border-box"></div>
<div class="t" style="left:496px;top:251px;width:110px;height:21px;line-height:21px;text-align:left;font-size:14.3px">From initial value</div>
<div style="left:138px;top:275px;width:471px;height:21px;background:#c6c6c6;border-top:1px solid #9cd0d0;box-sizing:border-box"></div>
<div style="left:138.5px;top:279.5px;width:12px;height:12px;background:#fff;border-top:2px solid #000;border-left:2px solid #000;border-bottom:1px solid #e8e8e8;border-right:1px solid #e8e8e8;box-sizing:border-box"></div>
<div class="t" style="left:161px;top:275px;width:160px;height:21px;line-height:21px;text-align:left;font-size:14.3px">Fix Gaussian amplitudes</div>
<div style="left:324.5px;top:279.5px;width:12px;height:12px;background:#fff;border-top:2px solid #000;border-left:2px solid #000;border-bottom:1px solid #e8e8e8;border-right:1px solid #e8e8e8;box-sizing:border-box"></div>
<div class="t" style="left:347px;top:275px;width:80px;height:21px;line-height:21px;text-align:left;font-size:14.3px">% variation</div>
<div style="left:424px;top:275px;width:49px;height:21px;box-sizing:border-box;background:#c6c6c6;border-top:2px solid #000;border-left:2px solid #000;border-bottom:1px solid #f0f0f0;border-right:1px solid #f0f0f0"></div>
<div class="t" style="left:424px;top:275px;width:49px;height:21px;line-height:21px;text-align:center;font-size:14.3px">5</div>
<div style="left:474px;top:279.5px;width:12px;height:12px;background:#fff;border-top:2px solid #000;border-left:2px solid #000;border-bottom:1px solid #e8e8e8;border-right:1px solid #e8e8e8;box-sizing:border-box"></div>
<div class="t" style="left:496px;top:275px;width:110px;height:21px;line-height:21px;text-align:left;font-size:14.3px">From initial value</div>
<div style="left:138px;top:299px;width:471px;height:21px;background:#c6c6c6;border-top:1px solid #9cd0d0;box-sizing:border-box"></div>
<div style="left:138.5px;top:303.5px;width:12px;height:12px;background:#fff;border-top:2px solid #000;border-left:2px solid #000;border-bottom:1px solid #e8e8e8;border-right:1px solid #e8e8e8;box-sizing:border-box"></div>
<div class="t" style="left:161px;top:299px;width:160px;height:21px;line-height:21px;text-align:left;font-size:14.3px">Fix distortion 1</div>
<div style="left:324.5px;top:303.5px;width:12px;height:12px;background:#fff;border-top:2px solid #000;border-left:2px solid #000;border-bottom:1px solid #e8e8e8;border-right:1px solid #e8e8e8;box-sizing:border-box"></div>
<div class="t" style="left:347px;top:299px;width:80px;height:21px;line-height:21px;text-align:left;font-size:14.3px">% variation</div>
<div style="left:424px;top:299px;width:49px;height:21px;box-sizing:border-box;background:#c6c6c6;border-top:2px solid #000;border-left:2px solid #000;border-bottom:1px solid #f0f0f0;border-right:1px solid #f0f0f0"></div>
<div class="t" style="left:424px;top:299px;width:49px;height:21px;line-height:21px;text-align:center;font-size:14.3px">5</div>
<div style="left:474px;top:303.5px;width:12px;height:12px;background:#fff;border-top:2px solid #000;border-left:2px solid #000;border-bottom:1px solid #e8e8e8;border-right:1px solid #e8e8e8;box-sizing:border-box"></div>
<div class="t" style="left:496px;top:299px;width:110px;height:21px;line-height:21px;text-align:left;font-size:14.3px">From initial value</div>
<div style="left:153px;top:227px;width:145px;height:21px;border:1px dotted #333;box-sizing:border-box"></div>
<div style="left:138px;top:323px;width:471px;height:20px;background:#c6c6c6;border-top:1px solid #9cd0d0;box-sizing:border-box"></div>
<div style="left:138.5px;top:327.5px;width:12px;height:12px;background:#fff;border-top:2px solid #000;border-left:2px solid #000;border-bottom:1px solid #e8e8e8;border-right:1px solid #e8e8e8;box-sizing:border-box"></div>
<svg style="left:138.5px;top:327.5px" width="12" height="12"><path d="M2.5 6.5 L5 9.5 L10 3" stroke="#000" stroke-width="2.2" fill="none"/></svg>
<div class="t" style="left:161px;top:323px;width:160px;height:20px;line-height:20px;text-align:left;font-size:14.3px">Common distortion 1</div>
<div style="left:138px;top:343px;width:186px;height:93px;background:#000"></div>
<div style="left:324px;top:343px;width:285px;height:22px;background:#c6c6c6"></div>
<div class="t" style="left:138px;top:343px;width:181px;height:23px;line-height:23px;text-align:right;font-weight:bold;font-size:12.1px;color:#fff">Fix Gaussians:</div>
<div class="t" style="left:138px;top:365px;width:181px;height:23px;line-height:23px;text-align:right;font-weight:bold;font-size:12.1px;color:#fff">Epsilon:</div>
<div class="t" style="left:138px;top:389px;width:181px;height:23px;line-height:23px;text-align:right;font-weight:bold;font-size:12.1px;color:#fff">Iterations:</div>
<div class="t" style="left:138px;top:413px;width:181px;height:23px;line-height:23px;text-align:right;font-weight:bold;font-size:12.1px;color:#fff">Maximum calls:</div>
<div style="left:325px;top:347.5px;width:12px;height:12px;background:#fff;border-top:2px solid #000;border-left:2px solid #000;border-bottom:1px solid #e8e8e8;border-right:1px solid #e8e8e8;box-sizing:border-box"></div>
<div class="t" style="left:348.5px;top:343px;width:20px;height:22px;line-height:22px;text-align:left;font-size:12.4px">1</div>
<div style="left:395.5px;top:347.5px;width:12px;height:12px;background:#fff;border-top:2px solid #000;border-left:2px solid #000;border-bottom:1px solid #e8e8e8;border-right:1px solid #e8e8e8;box-sizing:border-box"></div>
<div class="t" style="left:418.5px;top:343px;width:20px;height:22px;line-height:22px;text-align:left;font-size:12.4px">2</div>
<div style="left:467.5px;top:347.5px;width:12px;height:12px;background:#fff;border-top:2px solid #000;border-left:2px solid #000;border-bottom:1px solid #e8e8e8;border-right:1px solid #e8e8e8;box-sizing:border-box"></div>
<div class="t" style="left:490.5px;top:343px;width:20px;height:22px;line-height:22px;text-align:left;font-size:12.4px">3</div>
<div style="left:538.5px;top:347.5px;width:12px;height:12px;background:#fff;border-top:2px solid #000;border-left:2px solid #000;border-bottom:1px solid #e8e8e8;border-right:1px solid #e8e8e8;box-sizing:border-box"></div>
<div class="t" style="left:561.5px;top:343px;width:20px;height:22px;line-height:22px;text-align:left;font-size:12.4px">4</div>
<div style="left:324px;top:365px;width:285px;height:71px;background:#d8d8d8"></div>
<div style="left:325px;top:365px;width:284px;height:23px;background:#fff;border-top:2px solid #000;border-left:2px solid #000;border-bottom:1px solid #d8d8d8;border-right:1px solid #d8d8d8;box-sizing:border-box;"></div>
<div class="t" style="left:325px;top:365px;width:284px;height:23px;line-height:23px;text-align:center;font-size:13.6px">2.81355e-10</div>
<div style="left:325px;top:389px;width:284px;height:23px;background:#fff;border-top:2px solid #000;border-left:2px solid #000;border-bottom:1px solid #d8d8d8;border-right:1px solid #d8d8d8;box-sizing:border-box;"></div>
<div class="t" style="left:325px;top:389px;width:284px;height:23px;line-height:23px;text-align:center;font-size:13.6px">100</div>
<div style="left:325px;top:413px;width:284px;height:23px;background:#fff;border-top:2px solid #000;border-left:2px solid #000;border-bottom:1px solid #d8d8d8;border-right:1px solid #d8d8d8;box-sizing:border-box;"></div>
<div class="t" style="left:325px;top:413px;width:284px;height:23px;line-height:23px;text-align:center;font-size:13.6px">100</div>
<div style="left:138px;top:440px;width:235px;height:27px;background:#00dede;border-top:1px solid #8cf6f6;border-left:1px solid #8cf6f6;border-bottom:1px solid #000;border-right:1px solid #000;box-sizing:border-box;border:2px solid #000;border-top-color:#000;border-left-color:#000"></div>
<div class="t en" style="left:138px;top:440px;width:235px;height:27px;line-height:27px;text-align:center;font-size:14.3px">Restore to initial values</div>
<div style="left:140px;top:442px;width:231px;height:1px;background:#8cf6f6"></div>
<div style="left:140px;top:442px;width:1px;height:23px;background:#fff"></div>
<div style="left:375px;top:440px;width:234px;height:27px;background:#00dede;border-top:1px solid #8cf6f6;border-left:1px solid #8cf6f6;border-bottom:1px solid #000;border-right:1px solid #000;box-sizing:border-box;"></div>
<div class="t en" style="left:375px;top:440px;width:234px;height:27px;line-height:27px;text-align:center;font-size:14.3px">Undo</div>
<div style="left:138px;top:473px;width:117px;height:26px;background:#00dede;border-top:1px solid #8cf6f6;border-left:1px solid #8cf6f6;border-bottom:1px solid #000;border-right:1px solid #000;box-sizing:border-box;"></div>
<div class="t en" style="left:138px;top:473px;width:117px;height:26px;line-height:26px;text-align:center;font-size:14.3px">LM</div>
<div style="left:257px;top:473px;width:116px;height:26px;background:#00dede;border-top:1px solid #8cf6f6;border-left:1px solid #8cf6f6;border-bottom:1px solid #000;border-right:1px solid #000;box-sizing:border-box;"></div>
<div class="t dis" style="left:257px;top:473px;width:116px;height:26px;line-height:26px;text-align:center;font-size:14.3px">GS SD</div>
<div style="left:375px;top:473px;width:115px;height:26px;background:#00dede;border-top:1px solid #8cf6f6;border-left:1px solid #8cf6f6;border-bottom:1px solid #000;border-right:1px solid #000;box-sizing:border-box;"></div>
<div class="t dis" style="left:375px;top:473px;width:115px;height:26px;line-height:26px;text-align:center;font-size:14.3px">GS IH</div>
<div style="left:491px;top:473px;width:118px;height:26px;background:#00dede;border-top:1px solid #8cf6f6;border-left:1px solid #8cf6f6;border-bottom:1px solid #000;border-right:1px solid #000;box-sizing:border-box;"></div>
<div class="t dis" style="left:491px;top:473px;width:118px;height:26px;line-height:26px;text-align:center;font-size:14.3px">GS CG</div>
<div style="left:138px;top:506px;width:389px;height:24px;background:#c6c6c6;border-bottom:1px solid #f0f0f0;box-sizing:border-box"></div>
<div style="left:484px;top:506px;width:1px;height:24px;background:#f4f4f4"></div>
<div style="left:527px;top:505px;width:82px;height:26px;background:#00dede;border-top:1px solid #8cf6f6;border-left:1px solid #8cf6f6;border-bottom:1px solid #000;border-right:1px solid #000;box-sizing:border-box;"></div>
<div class="t dis" style="left:527px;top:505px;width:82px;height:26px;line-height:26px;text-align:center;font-size:14.3px">Stop</div>
<div style="left:138px;top:537px;width:235px;height:26px;background:#00dede;border-top:1px solid #8cf6f6;border-left:1px solid #8cf6f6;border-bottom:1px solid #000;border-right:1px solid #000;box-sizing:border-box;"></div>
<div class="t en" style="left:138px;top:537px;width:235px;height:26px;line-height:26px;text-align:center;font-size:14.3px">Help</div>
<div style="left:375px;top:537px;width:234px;height:26px;background:#00dede;border-top:1px solid #8cf6f6;border-left:1px solid #8cf6f6;border-bottom:1px solid #000;border-right:1px solid #000;box-sizing:border-box;"></div>
<div class="t en" style="left:375px;top:537px;width:234px;height:26px;line-height:26px;text-align:center;font-size:14.3px">Close</div>
</body></html>
